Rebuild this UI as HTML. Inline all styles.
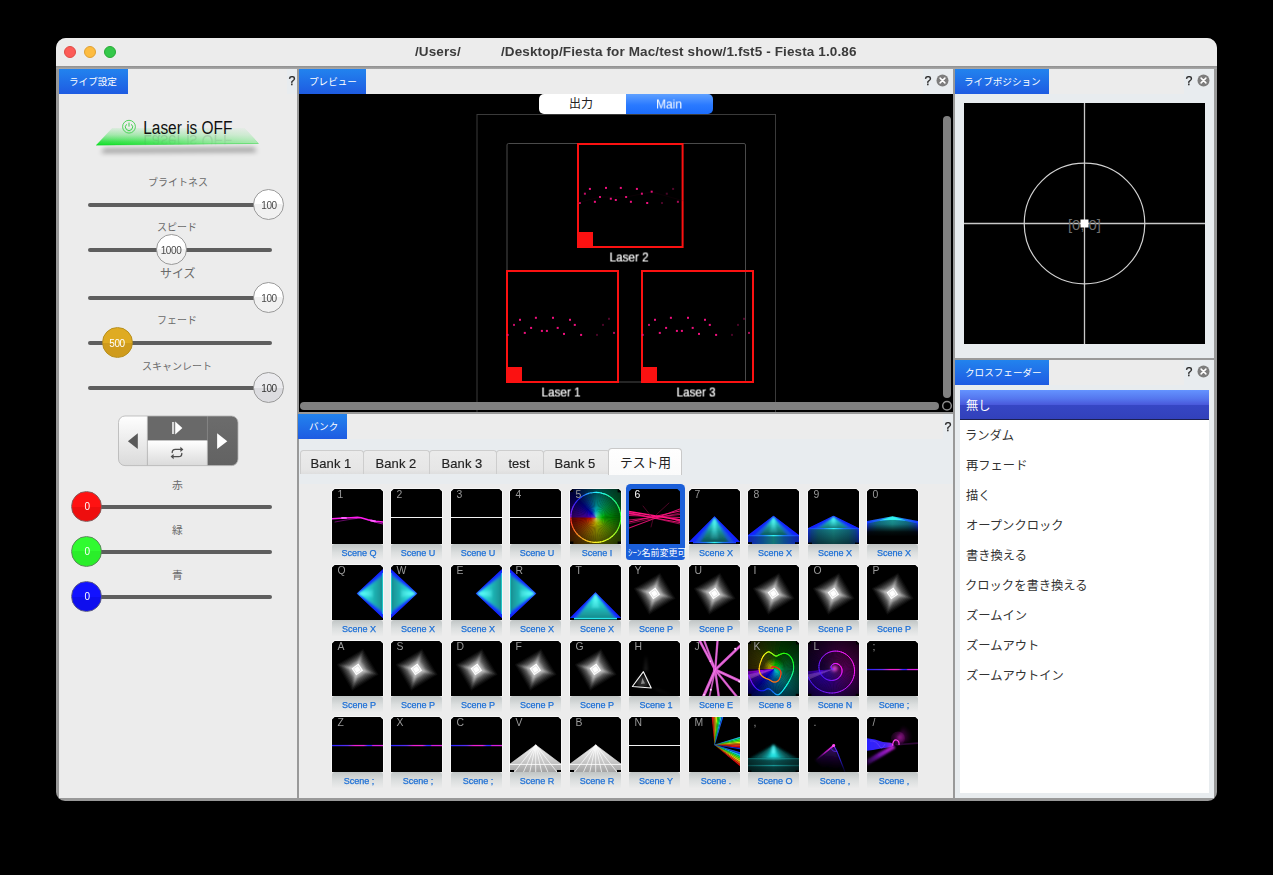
<!DOCTYPE html>
<html lang="ja"><head><meta charset="utf-8"><title>/Users/ /Desktop/Fiesta for Mac/test show/1.fst5 - Fiesta 1.0.86</title>
<style>
html,body{margin:0;padding:0;background:#000;}
body{width:1273px;height:875px;position:relative;overflow:hidden;font-family:"Liberation Sans",sans-serif;}
div,span.t,svg.jt,svg.a{position:absolute;box-sizing:border-box;}
span.t{white-space:nowrap;line-height:1;will-change:transform;}
svg.g{will-change:transform;}
svg.jt{overflow:visible;}
svg.jt text{font-family:"Liberation Sans","Noto Sans CJK JP",sans-serif;}
#win{left:56px;top:38px;width:1161px;height:763px;border-radius:10px 10px 9px 9px;overflow:hidden;background:#999;}
#win>div.o{left:-56px;top:-38px;width:1273px;height:875px;}
.tab{background:linear-gradient(#2283ee,#1e5be2);}
.hdr{background:#ececec;}
.q{font-weight:normal;}
</style></head>
<body>
<div id="win"><div class="o">
<div style="left:56px;top:38px;width:1161px;height:28px;background:#ececec;"></div><div style="left:56px;top:66px;width:1161px;height:3px;background:linear-gradient(#8f8f8f,#a9a9a9);"></div><div style="left:64px;top:46px;width:12px;height:12px;border-radius:50%;background:#fc5b57;border:0.5px solid #df4a43;"></div><div style="left:84px;top:46px;width:12px;height:12px;border-radius:50%;background:#fdbc40;border:0.5px solid #dfa032;"></div><div style="left:104px;top:46px;width:12px;height:12px;border-radius:50%;background:#34c84a;border:0.5px solid #27aa35;"></div><span class="t" style="left:415px;top:52px;font-size:13.5px;color:#3b3b3b;font-weight:bold;transform:translate(0,-50%);letter-spacing:0.1px;">/Users/</span><span class="t" style="left:501px;top:52px;font-size:13.5px;color:#3b3b3b;font-weight:bold;transform:translate(0,-50%);letter-spacing:0.12px;">/Desktop/Fiesta for Mac/test show/1.fst5 - Fiesta 1.0.86</span><div style="left:59px;top:69px;width:238px;height:729px;background:#ececec;"></div><div style="left:299px;top:69px;width:654px;height:343px;background:#000;"></div><div style="left:299px;top:69px;width:654px;height:25px;background:#ececec;"></div><div style="left:923px;top:69px;width:30px;height:25px;background:#e8ecef;"></div><div style="left:299px;top:414px;width:654px;height:384px;background:#ececec;"></div><div style="left:299px;top:439px;width:654px;height:45px;background:#e8ecef;"></div><div style="left:943px;top:414px;width:10px;height:25px;background:#e8ecef;"></div><div style="left:955px;top:69px;width:259px;height:289px;background:#e8ecef;"></div><div style="left:955px;top:69px;width:229px;height:25px;background:#ececec;"></div><div style="left:955px;top:360px;width:259px;height:438px;background:#e8ecef;"></div><div style="left:955px;top:360px;width:229px;height:25px;background:#ececec;"></div><div style="left:287px;top:69px;width:10px;height:25px;background:#e8ecef;"></div><div class="tab" style="left:59px;top:69px;width:69px;height:25px;"></div><svg class="jt" style="left:68.99px;top:75.73px" width="50.06" height="12.48" viewBox="0 -9.12 50.06 12.48"><text x="0" y="0" font-size="9.6" fill="#fff">ライブ設定</text></svg><div class="tab" style="left:299px;top:69px;width:67px;height:25px;"></div><svg class="jt" style="left:309.14px;top:75.73px" width="48.47" height="12.48" viewBox="0 -9.12 48.47 12.48"><text x="0" y="0" font-size="9.6" fill="#fff">プレビュー</text></svg><div class="tab" style="left:955px;top:69px;width:94px;height:25px;"></div><svg class="jt" style="left:964.18px;top:75.73px" width="77.04" height="12.48" viewBox="0 -9.12 77.04 12.48"><text x="0" y="0" font-size="9.6" fill="#fff">ライブポジション</text></svg><div class="tab" style="left:955px;top:360px;width:94px;height:25px;"></div><svg class="jt" style="left:964.78px;top:366.73px" width="76.48" height="12.48" viewBox="0 -9.12 76.48 12.48"><text x="0" y="0" font-size="9.6" fill="#fff">クロスフェーダー</text></svg><div class="tab" style="left:298.4px;top:414px;width:48.6px;height:25px;"></div><svg class="jt" style="left:308.69px;top:420.73px" width="30.63" height="12.48" viewBox="0 -9.12 30.63 12.48"><text x="0" y="0" font-size="9.6" fill="#fff">バンク</text></svg><span class="t" style="left:292px;top:81.3px;font-size:12.5px;color:#222;font-weight:normal;transform:translate(-50%,-50%);-webkit-text-stroke:0.25px #222;">?</span><span class="t" style="left:927.7px;top:81.3px;font-size:12.5px;color:#222;font-weight:normal;transform:translate(-50%,-50%);-webkit-text-stroke:0.25px #222;">?</span><svg class="a" style="left:936px;top:74.1px" width="13" height="13" viewBox="0 0 13 13"><circle cx="6.5" cy="6.5" r="6" fill="#7d7d7d"/><path d="M4.1 4.1L8.9 8.9M8.9 4.1L4.1 8.9" stroke="#fff" stroke-width="1.5" stroke-linecap="round"/></svg><span class="t" style="left:1188.8px;top:81.3px;font-size:12.5px;color:#222;font-weight:normal;transform:translate(-50%,-50%);-webkit-text-stroke:0.25px #222;">?</span><svg class="a" style="left:1197px;top:74.1px" width="13" height="13" viewBox="0 0 13 13"><circle cx="6.5" cy="6.5" r="6" fill="#7d7d7d"/><path d="M4.1 4.1L8.9 8.9M8.9 4.1L4.1 8.9" stroke="#fff" stroke-width="1.5" stroke-linecap="round"/></svg><span class="t" style="left:1188.8px;top:372.3px;font-size:12.5px;color:#222;font-weight:normal;transform:translate(-50%,-50%);-webkit-text-stroke:0.25px #222;">?</span><svg class="a" style="left:1197px;top:365.1px" width="13" height="13" viewBox="0 0 13 13"><circle cx="6.5" cy="6.5" r="6" fill="#7d7d7d"/><path d="M4.1 4.1L8.9 8.9M8.9 4.1L4.1 8.9" stroke="#fff" stroke-width="1.5" stroke-linecap="round"/></svg><span class="t" style="left:947.7px;top:426.8px;font-size:12.5px;color:#222;font-weight:normal;transform:translate(-50%,-50%);-webkit-text-stroke:0.25px #222;">?</span><svg class="a" style="left:80px;top:100px" width="200" height="70" viewBox="80 100 200 70">
<defs>
<linearGradient id="lg1" x1="0" y1="0" x2="0" y2="1"><stop offset="0" stop-color="#46e25a" stop-opacity="0.10"/><stop offset="0.4" stop-color="#36e24c" stop-opacity="0.42"/><stop offset="0.8" stop-color="#20e236" stop-opacity="0.9"/><stop offset="1" stop-color="#10e026" stop-opacity="1"/></linearGradient>
<linearGradient id="lg2" x1="0" y1="0" x2="1" y2="0"><stop offset="0" stop-color="#ececec" stop-opacity="0"/><stop offset="0.3" stop-color="#ececec" stop-opacity="0.12"/><stop offset="0.7" stop-color="#ececec" stop-opacity="0.5"/><stop offset="1" stop-color="#ececec" stop-opacity="0.66"/></linearGradient>
<filter id="bl1" x="-20%" y="-200%" width="140%" height="500%"><feGaussianBlur stdDeviation="2.6"/></filter>
<linearGradient id="rf" x1="0" y1="0" x2="0" y2="1"><stop offset="0" stop-color="#fff" stop-opacity="0.15"/><stop offset="1" stop-color="#fff" stop-opacity="0"/></linearGradient>
<mask id="rfm"><rect x="130" y="134" width="120" height="12" fill="url(#rf)"/></mask>
</defs>
<path d="M104 148.5 L254 147.5 L257 152 L101 153 Z" fill="#000" opacity="0.34" filter="url(#bl1)"/>
<path d="M112.2 128 L244.2 128 L258.6 143.4 L96 145.2 Z" fill="url(#lg1)"/>
<path d="M112.2 128 L244.2 128 L258.6 143.4 L96 145.2 Z" fill="url(#lg2)"/>
<path d="M96 145.2 L258.6 143.4" stroke="#14cc28" stroke-width="0.6" opacity="0.6"/>
<g mask="url(#rfm)"><text x="143.2" y="134" transform="translate(0,268.6) scale(1,-1)" font-size="17.6" textLength="89.3" lengthAdjust="spacingAndGlyphs" fill="#111" font-family="Liberation Sans, sans-serif">Laser is OFF</text></g>
<text x="143.2" y="133.6" font-size="17.6" textLength="89.3" lengthAdjust="spacingAndGlyphs" fill="#111" font-family="Liberation Sans, sans-serif">Laser is OFF</text>
<circle cx="129" cy="126.7" r="6.4" fill="none" stroke="#3fd04c" stroke-width="0.9"/>
<path d="M126.6 124.3 A3.6 3.6 0 1 0 131.4 124.3" fill="none" stroke="#3fd04c" stroke-width="1"/>
<path d="M129 122.6 V126.6" stroke="#3fd04c" stroke-width="1"/>
</svg><svg class="jt" style="left:147.63px;top:177.2px" width="63.05" height="13" viewBox="0 -9.5 63.05 13"><text x="0" y="0" font-size="10" fill="#6a6a6a">ブライトネス</text></svg><div style="left:88px;top:203px;width:184px;height:4px;border-radius:2px;background:#5e5e5e;"></div><div style="left:253.4px;top:189.2px;width:31px;height:31px;border-radius:50%;border:1px solid #9a9a9a;background:linear-gradient(#ffffff 0,#ffffff 50%,#f1f1f1 50%,#f1f1f1 100%);"></div><span class="t" style="left:269px;top:205.6px;font-size:10px;color:#4a4a4a;font-weight:normal;transform:translate(-50%,-50%);letter-spacing:-0.4px;">100</span><svg class="jt" style="left:156.96px;top:222.2px" width="43.79" height="13" viewBox="0 -9.5 43.79 13"><text x="0" y="0" font-size="10" fill="#6a6a6a">スピード</text></svg><div style="left:88px;top:248px;width:184px;height:4px;border-radius:2px;background:#5e5e5e;"></div><div style="left:155.5px;top:234.2px;width:31px;height:31px;border-radius:50%;border:1px solid #9a9a9a;background:linear-gradient(#ffffff 0,#ffffff 50%,#f1f1f1 50%,#f1f1f1 100%);"></div><span class="t" style="left:171.1px;top:250.6px;font-size:10px;color:#4a4a4a;font-weight:normal;transform:translate(-50%,-50%);letter-spacing:-0.4px;">1000</span><svg class="jt" style="left:160.05px;top:267.04px" width="37.64" height="15.6" viewBox="0 -11.4 37.64 15.6"><text x="0" y="0" font-size="12" fill="#6a6a6a">サイズ</text></svg><div style="left:88px;top:296px;width:184px;height:4px;border-radius:2px;background:#5e5e5e;"></div><div style="left:253.4px;top:282.2px;width:31px;height:31px;border-radius:50%;border:1px solid #9a9a9a;background:linear-gradient(#ffffff 0,#ffffff 50%,#f1f1f1 50%,#f1f1f1 100%);"></div><span class="t" style="left:269px;top:298.6px;font-size:10px;color:#4a4a4a;font-weight:normal;transform:translate(-50%,-50%);letter-spacing:-0.4px;">100</span><svg class="jt" style="left:157.04px;top:315.2px" width="43.76" height="13" viewBox="0 -9.5 43.76 13"><text x="0" y="0" font-size="10" fill="#6a6a6a">フェード</text></svg><div style="left:88px;top:341px;width:184px;height:4px;border-radius:2px;background:#5e5e5e;"></div><div style="left:101.6px;top:327.2px;width:31px;height:31px;border-radius:50%;border:1px solid #b8901e;background:linear-gradient(#dfab22 0,#dfab22 50%,#cf9b1c 50%,#cf9b1c 100%);"></div><span class="t" style="left:117.2px;top:343.6px;font-size:10px;color:#ffffff;font-weight:normal;transform:translate(-50%,-50%);letter-spacing:-0.4px;">500</span><svg class="jt" style="left:141.77px;top:360.2px" width="74" height="13" viewBox="0 -9.5 74 13"><text x="0" y="0" font-size="10" fill="#6a6a6a">スキャンレート</text></svg><div style="left:88px;top:386px;width:184px;height:4px;border-radius:2px;background:#5e5e5e;"></div><div style="left:253.4px;top:372.2px;width:31px;height:31px;border-radius:50%;border:1px solid #9a9a9a;background:linear-gradient(#ebebee 0,#ebebee 50%,#dcdce0 50%,#dcdce0 100%);"></div><span class="t" style="left:269px;top:388.6px;font-size:10px;color:#333;font-weight:normal;transform:translate(-50%,-50%);letter-spacing:-0.4px;">100</span><svg class="a" style="left:116px;top:413px" width="126" height="56" viewBox="116 413 126 56">
<defs>
<linearGradient id="tg1" x1="0" y1="0" x2="0" y2="1"><stop offset="0" stop-color="#ffffff"/><stop offset="1" stop-color="#d9d9d9"/></linearGradient>
<linearGradient id="tg2" x1="0" y1="0" x2="0" y2="1"><stop offset="0" stop-color="#6c6c6c"/><stop offset="1" stop-color="#626262"/></linearGradient>
<clipPath id="tcp"><rect x="118.5" y="416" width="119.5" height="49.6" rx="6.5"/></clipPath>
</defs>
<g clip-path="url(#tcp)">
<rect x="118" y="415" width="121" height="52" fill="url(#tg1)"/>
<rect x="147.6" y="415" width="60" height="25.6" fill="#696969"/>
<rect x="147.6" y="440.6" width="60" height="26" fill="url(#tg1)"/>
<rect x="207.6" y="415" width="32" height="52" fill="url(#tg2)"/>
<path d="M147.4 416 V466 M207.4 440.6 V466" stroke="#a8a8a8" stroke-width="0.7"/>
<path d="M207.4 416 V440.6" stroke="#7e7e7e" stroke-width="0.7"/>
</g>
<rect x="118.5" y="416" width="119.5" height="49.6" rx="6.5" fill="none" stroke="#b4b4b4" stroke-width="0.8"/>
<path d="M127.9 441.2 L137.8 433.2 V449 Z" fill="#595959"/>
<path d="M227.3 441.2 L217.1 433.2 V449 Z" fill="#fff"/>
<rect x="172" y="422" width="2.2" height="12" fill="#d8d8d8"/>
<path d="M175.2 421.6 L182.4 428 L175.2 434.4 Z" fill="#fff"/>
<g fill="none" stroke="#4e4e4e" stroke-width="1.3" stroke-linecap="round" stroke-linejoin="round">
<path d="M172.2 452.6 A3.2 3.2 0 0 1 175.4 449.4 H181"/>
<path d="M181.8 453.4 A3.2 3.2 0 0 1 178.6 456.6 H173"/>
</g>
<path d="M180.4 446.8 L183.4 449.4 L180.4 452 Z" fill="#4e4e4e"/>
<path d="M173.6 454 L170.6 456.6 L173.6 459.2 Z" fill="#4e4e4e"/>
</svg><svg class="jt" style="left:172.39px;top:479.24px" width="12.8" height="14.04" viewBox="0 -10.26 12.8 14.04"><text x="0" y="0" font-size="10.8" fill="#6a6a6a">赤</text></svg><div style="left:88px;top:505px;width:184px;height:4px;border-radius:2px;background:#5e5e5e;"></div><div style="left:71.1px;top:491px;width:31px;height:31px;border-radius:50%;border:1px solid #8a5a5a;background:linear-gradient(#ff1212 0,#ff1212 50%,#ee0e0e 50%,#ee0e0e 100%);"></div><span class="t" style="left:86.7px;top:507.4px;font-size:10px;color:#fff;font-weight:normal;transform:translate(-50%,-50%);letter-spacing:-0.4px;">0</span><svg class="jt" style="left:172.43px;top:524.04px" width="12.8" height="14.04" viewBox="0 -10.26 12.8 14.04"><text x="0" y="0" font-size="10.8" fill="#6a6a6a">緑</text></svg><div style="left:88px;top:550px;width:184px;height:4px;border-radius:2px;background:#5e5e5e;"></div><div style="left:71.1px;top:536px;width:31px;height:31px;border-radius:50%;border:1px solid #5a8a5a;background:linear-gradient(#30fb30 0,#30fb30 50%,#2aee2a 50%,#2aee2a 100%);"></div><span class="t" style="left:86.7px;top:552.4px;font-size:10px;color:#fff;font-weight:normal;transform:translate(-50%,-50%);letter-spacing:-0.4px;">0</span><svg class="jt" style="left:172.4px;top:568.74px" width="12.8" height="14.04" viewBox="0 -10.26 12.8 14.04"><text x="0" y="0" font-size="10.8" fill="#6a6a6a">青</text></svg><div style="left:88px;top:595px;width:184px;height:4px;border-radius:2px;background:#5e5e5e;"></div><div style="left:71.1px;top:581px;width:31px;height:31px;border-radius:50%;border:1px solid #5a5a8a;background:linear-gradient(#1212ff 0,#1212ff 50%,#0e0eee 50%,#0e0eee 100%);"></div><span class="t" style="left:86.7px;top:597.4px;font-size:10px;color:#fff;font-weight:normal;transform:translate(-50%,-50%);letter-spacing:-0.4px;">0</span><svg class="a" style="left:299px;top:94px" width="654" height="318" viewBox="299 94 654 318"><rect x="477" y="114.5" width="298.5" height="300" fill="none" stroke="#3a3a3a" stroke-width="1"/><rect x="507" y="143.5" width="238.5" height="238.5" rx="1.5" fill="none" stroke="#4a4a4a" stroke-width="1"/><rect x="578" y="144" width="104.60000000000002" height="103" fill="none" stroke="#fb1111" stroke-width="2"/><rect x="577" y="232" width="16" height="16" fill="#fb1111"/><rect x="588.9" y="187.9" width="2" height="2" fill="#f0107e" opacity="1"/><rect x="605" y="186.9" width="2" height="2" fill="#f0107e" opacity="1"/><rect x="619.8" y="186.9" width="2" height="2" fill="#f0107e" opacity="1"/><rect x="635.9" y="187.9" width="2" height="2" fill="#f0107e" opacity="1"/><rect x="650.7" y="190.7" width="2" height="2" fill="#f0107e" opacity="1"/><rect x="672.1" y="187.9" width="2" height="2" fill="#f0107e" opacity="0.35"/><rect x="583.9" y="192.7" width="2" height="2" fill="#f0107e" opacity="0.8"/><rect x="599" y="196" width="2" height="2" fill="#f0107e" opacity="1"/><rect x="609.8" y="197.7" width="2" height="2" fill="#f0107e" opacity="1"/><rect x="614.8" y="199" width="2" height="2" fill="#f0107e" opacity="1"/><rect x="625.1" y="196" width="2" height="2" fill="#f0107e" opacity="1"/><rect x="640.9" y="192.7" width="2" height="2" fill="#f0107e" opacity="1"/><rect x="629.9" y="200.8" width="2" height="2" fill="#f0107e" opacity="1"/><rect x="646.2" y="202" width="2" height="2" fill="#f0107e" opacity="1"/><rect x="593.9" y="200.8" width="2" height="2" fill="#f0107e" opacity="1"/><rect x="578.9" y="202" width="2" height="2" fill="#f0107e" opacity="0.8"/><rect x="665.8" y="192.7" width="2" height="2" fill="#f0107e" opacity="0.3"/><rect x="661" y="202" width="2" height="2" fill="#f0107e" opacity="0.3"/><rect x="676.9" y="200.8" width="2" height="2" fill="#f0107e" opacity="0.7"/><rect x="507" y="271" width="111" height="111" fill="none" stroke="#fb1111" stroke-width="2"/><rect x="506" y="367" width="16" height="16" fill="#fb1111"/><rect x="519" y="318.8" width="2" height="2" fill="#f0107e" opacity="1"/><rect x="534.9" y="316.8" width="2" height="2" fill="#f0107e" opacity="1"/><rect x="552" y="316.8" width="2" height="2" fill="#f0107e" opacity="1"/><rect x="569" y="318.8" width="2" height="2" fill="#f0107e" opacity="1"/><rect x="573.8" y="323.9" width="2" height="2" fill="#f0107e" opacity="1"/><rect x="608" y="317.8" width="2" height="2" fill="#f0107e" opacity="0.35"/><rect x="513" y="323.9" width="2" height="2" fill="#f0107e" opacity="0.8"/><rect x="530.1" y="326.9" width="2" height="2" fill="#f0107e" opacity="1"/><rect x="523.8" y="331.9" width="2" height="2" fill="#f0107e" opacity="1"/><rect x="540.9" y="329.9" width="2" height="2" fill="#f0107e" opacity="1"/><rect x="545.9" y="329.9" width="2" height="2" fill="#f0107e" opacity="1"/><rect x="556.7" y="326.9" width="2" height="2" fill="#f0107e" opacity="1"/><rect x="563" y="332.9" width="2" height="2" fill="#f0107e" opacity="1"/><rect x="580.1" y="333.9" width="2" height="2" fill="#f0107e" opacity="1"/><rect x="506.7" y="333.9" width="2" height="2" fill="#f0107e" opacity="0.8"/><rect x="602" y="323.9" width="2" height="2" fill="#f0107e" opacity="0.3"/><rect x="596" y="333.9" width="2" height="2" fill="#f0107e" opacity="0.3"/><rect x="613" y="331.9" width="2" height="2" fill="#f0107e" opacity="0.7"/><rect x="642" y="271" width="111" height="111" fill="none" stroke="#fb1111" stroke-width="2"/><rect x="641" y="367" width="16" height="16" fill="#fb1111"/><rect x="654" y="318.8" width="2" height="2" fill="#f0107e" opacity="1"/><rect x="669.9" y="316.8" width="2" height="2" fill="#f0107e" opacity="1"/><rect x="687" y="316.8" width="2" height="2" fill="#f0107e" opacity="1"/><rect x="704" y="318.8" width="2" height="2" fill="#f0107e" opacity="1"/><rect x="708.8" y="323.9" width="2" height="2" fill="#f0107e" opacity="1"/><rect x="743" y="317.8" width="2" height="2" fill="#f0107e" opacity="0.35"/><rect x="648" y="323.9" width="2" height="2" fill="#f0107e" opacity="0.8"/><rect x="665.1" y="326.9" width="2" height="2" fill="#f0107e" opacity="1"/><rect x="658.8" y="331.9" width="2" height="2" fill="#f0107e" opacity="1"/><rect x="675.9" y="329.9" width="2" height="2" fill="#f0107e" opacity="1"/><rect x="680.9" y="329.9" width="2" height="2" fill="#f0107e" opacity="1"/><rect x="691.7" y="326.9" width="2" height="2" fill="#f0107e" opacity="1"/><rect x="698" y="332.9" width="2" height="2" fill="#f0107e" opacity="1"/><rect x="715.1" y="333.9" width="2" height="2" fill="#f0107e" opacity="1"/><rect x="641.7" y="333.9" width="2" height="2" fill="#f0107e" opacity="0.8"/><rect x="737" y="323.9" width="2" height="2" fill="#f0107e" opacity="0.3"/><rect x="731" y="333.9" width="2" height="2" fill="#f0107e" opacity="0.3"/><rect x="748" y="331.9" width="2" height="2" fill="#f0107e" opacity="0.7"/><path d="M577 203 L600 197 L626 197 L652 192 L684 201" stroke="#40081e" stroke-width="0.6" fill="none" opacity="0.3"/></svg><span class="t" style="left:629.3px;top:256.9px;font-size:13px;color:#fff;font-weight:normal;transform:translate(-50%,-50%);transform:translate(-50%,-50%) scaleX(0.9);-webkit-text-stroke:0.2px #fff;">Laser 2</span><span class="t" style="left:561px;top:391.8px;font-size:13px;color:#fff;font-weight:normal;transform:translate(-50%,-50%);transform:translate(-50%,-50%) scaleX(0.9);-webkit-text-stroke:0.2px #fff;">Laser 1</span><span class="t" style="left:696px;top:391.8px;font-size:13px;color:#fff;font-weight:normal;transform:translate(-50%,-50%);transform:translate(-50%,-50%) scaleX(0.9);-webkit-text-stroke:0.2px #fff;">Laser 3</span><div style="left:539px;top:94.4px;width:87px;height:19.6px;background:#fff;border-radius:5px 0 0 5px;"></div><div style="left:626px;top:94.4px;width:87px;height:19.6px;background:linear-gradient(#5fa0ff,#2a7aff 55%,#1c6cfb);border-radius:0 5px 5px 0;"></div><svg class="jt" style="left:569.35px;top:97.44px" width="27.64" height="15.6" viewBox="0 -11.4 27.64 15.6"><text x="0" y="0" font-size="12" fill="#222">出力</text></svg><span class="t" style="left:669px;top:104.4px;font-size:13px;color:#fff;font-weight:normal;transform:translate(-50%,-50%);transform:translate(-50%,-50%) scaleX(0.92);">Main</span><div style="left:943px;top:116px;width:8px;height:282px;background:#808080;border-radius:4px;"></div><div style="left:300px;top:402px;width:639px;height:8.4px;background:#808080;border-radius:4.2px;"></div><svg class="a" style="left:940px;top:399px" width="14" height="14" viewBox="940 399 14 14"><circle cx="947" cy="405.8" r="4.3" fill="none" stroke="#8a8a8a" stroke-width="1.5"/></svg><svg class="a" style="left:964px;top:103px" width="241" height="241" viewBox="964 103 241 241">
<rect x="964" y="103" width="241" height="241" fill="#000"/>
<path d="M1084.5 103 V344 M964 223.5 H1205" stroke="#c8c8c8" stroke-width="1.3"/>
<circle cx="1084.5" cy="223.5" r="60.3" fill="none" stroke="#d0d0d0" stroke-width="1.2"/>
<text x="1084.5" y="230" font-size="15.5" fill="#707070" text-anchor="middle" font-family="Liberation Sans, sans-serif" textLength="33" lengthAdjust="spacingAndGlyphs">[0, 0]</text>
<rect x="1080.5" y="219.5" width="8" height="8" fill="#fff"/>
</svg><div style="left:960px;top:390px;width:249px;height:403px;background:#fff;"></div><div style="left:960px;top:390px;width:249px;height:29px;background:linear-gradient(#6493ff 0,#5576ee 30%,#4a5adc 50%,#3646c4 53%,#3241bb 100%);"></div><div style="left:960px;top:419px;width:249px;height:1px;background:#1c2050;"></div><svg class="jt" style="left:966.08px;top:397.87px" width="26.78" height="15.99" viewBox="0 -11.69 26.78 15.99"><text x="0" y="0" font-size="12.3" fill="#fff">無し</text></svg><svg class="jt" style="left:964.87px;top:427.87px" width="51.04" height="15.99" viewBox="0 -11.69 51.04 15.99"><text x="0" y="0" font-size="12.3" fill="#333">ランダム</text></svg><svg class="jt" style="left:966.1px;top:457.87px" width="63.89" height="15.99" viewBox="0 -11.69 63.89 15.99"><text x="0" y="0" font-size="12.3" fill="#333">再フェード</text></svg><svg class="jt" style="left:966.24px;top:487.87px" width="27.91" height="15.99" viewBox="0 -11.69 27.91 15.99"><text x="0" y="0" font-size="12.3" fill="#333">描く</text></svg><svg class="jt" style="left:965.55px;top:517.87px" width="99.61" height="15.99" viewBox="0 -11.69 99.61 15.99"><text x="0" y="0" font-size="12.3" fill="#333">オープンクロック</text></svg><svg class="jt" style="left:965.9px;top:547.87px" width="65.53" height="15.99" viewBox="0 -11.69 65.53 15.99"><text x="0" y="0" font-size="12.3" fill="#333">書き換える</text></svg><svg class="jt" style="left:965.37px;top:577.87px" width="126.01" height="15.99" viewBox="0 -11.69 126.01 15.99"><text x="0" y="0" font-size="12.3" fill="#333">クロックを書き換える</text></svg><svg class="jt" style="left:965.63px;top:607.87px" width="62.91" height="15.99" viewBox="0 -11.69 62.91 15.99"><text x="0" y="0" font-size="12.3" fill="#333">ズームイン</text></svg><svg class="jt" style="left:965.62px;top:637.87px" width="75.87" height="15.99" viewBox="0 -11.69 75.87 15.99"><text x="0" y="0" font-size="12.3" fill="#333">ズームアウト</text></svg><svg class="jt" style="left:965.63px;top:667.87px" width="98.9" height="15.99" viewBox="0 -11.69 98.9 15.99"><text x="0" y="0" font-size="12.3" fill="#333">ズームアウトイン</text></svg><div style="left:299.6px;top:450.4px;width:64.8px;height:23.3px;background:linear-gradient(#ebebeb,#e6e6e6 80%,#dedede);border:1px solid #cdcdcd;border-bottom:none;border-radius:3.5px 3.5px 0 0;"></div><span class="t" style="left:330.9px;top:462.6px;font-size:13px;color:#222;font-weight:normal;transform:translate(-50%,-50%);letter-spacing:0.05px;-webkit-text-stroke:0.15px #222;">Bank 1</span><div style="left:363.4px;top:450.4px;width:67px;height:23.3px;background:linear-gradient(#ebebeb,#e6e6e6 80%,#dedede);border:1px solid #cdcdcd;border-bottom:none;border-radius:3.5px 3.5px 0 0;"></div><span class="t" style="left:395.8px;top:462.6px;font-size:13px;color:#222;font-weight:normal;transform:translate(-50%,-50%);letter-spacing:0.05px;-webkit-text-stroke:0.15px #222;">Bank 2</span><div style="left:429.4px;top:450.4px;width:67.2px;height:23.3px;background:linear-gradient(#ebebeb,#e6e6e6 80%,#dedede);border:1px solid #cdcdcd;border-bottom:none;border-radius:3.5px 3.5px 0 0;"></div><span class="t" style="left:461.9px;top:462.6px;font-size:13px;color:#222;font-weight:normal;transform:translate(-50%,-50%);letter-spacing:0.05px;-webkit-text-stroke:0.15px #222;">Bank 3</span><div style="left:495.6px;top:450.4px;width:48px;height:23.3px;background:linear-gradient(#ebebeb,#e6e6e6 80%,#dedede);border:1px solid #cdcdcd;border-bottom:none;border-radius:3.5px 3.5px 0 0;"></div><span class="t" style="left:518.5px;top:462.6px;font-size:13px;color:#222;font-weight:normal;transform:translate(-50%,-50%);letter-spacing:0.05px;-webkit-text-stroke:0.15px #222;">test</span><div style="left:542.6px;top:450.4px;width:67.2px;height:23.3px;background:linear-gradient(#ebebeb,#e6e6e6 80%,#dedede);border:1px solid #cdcdcd;border-bottom:none;border-radius:3.5px 3.5px 0 0;"></div><span class="t" style="left:575.1px;top:462.6px;font-size:13px;color:#222;font-weight:normal;transform:translate(-50%,-50%);letter-spacing:0.05px;-webkit-text-stroke:0.15px #222;">Bank 5</span><div style="left:608.4px;top:448.2px;width:73.5px;height:27px;background:linear-gradient(#fff,#fbfbfb);border:1px solid #c9c9c9;border-bottom:none;border-radius:4px 4px 0 0;"></div><svg class="jt" style="left:619.76px;top:454.88px" width="52.11" height="16.64" viewBox="0 -12.16 52.11 16.64"><text x="0" y="0" font-size="12.8" fill="#222">テスト用</text></svg><svg class="a" style="left:0;top:0" width="0" height="0"><defs>
<clipPath id="tc"><path d="M0 2.6 L2.6 0 H48.4 L51 2.6 V55 H0 Z"/></clipPath>
<filter id="b03" x="-20%" y="-20%" width="140%" height="140%"><feGaussianBlur stdDeviation="0.3"/></filter>
<filter id="b05" x="-20%" y="-20%" width="140%" height="140%"><feGaussianBlur stdDeviation="0.5"/></filter>
<filter id="b08" x="-20%" y="-20%" width="140%" height="140%"><feGaussianBlur stdDeviation="0.8"/></filter>
<filter id="b15" x="-30%" y="-30%" width="160%" height="160%"><feGaussianBlur stdDeviation="1.5"/></filter>
<filter id="b3" x="-50%" y="-50%" width="200%" height="200%"><feGaussianBlur stdDeviation="3"/></filter>
<linearGradient id="hl" x1="0" y1="0" x2="1" y2="0"><stop offset="0" stop-color="#1838ff"/><stop offset="0.3" stop-color="#1c7cf0"/><stop offset="0.5" stop-color="#30f4ee"/><stop offset="0.7" stop-color="#1c7cf0"/><stop offset="1" stop-color="#1838ff"/></linearGradient>
<linearGradient id="hl2" x1="0" y1="0" x2="1" y2="0"><stop offset="0" stop-color="#1226d8"/><stop offset="0.28" stop-color="#0f5aa8"/><stop offset="0.5" stop-color="#168c8c"/><stop offset="0.72" stop-color="#0f5aa8"/><stop offset="1" stop-color="#1226d8"/></linearGradient>
<linearGradient id="hl3" x1="0" y1="0" x2="1" y2="0"><stop offset="0" stop-color="#1430f0"/><stop offset="0.06" stop-color="#104ca8"/><stop offset="0.2" stop-color="#126e84"/><stop offset="0.5" stop-color="#1a9494"/><stop offset="0.8" stop-color="#126e84"/><stop offset="0.94" stop-color="#104ca8"/><stop offset="1" stop-color="#1430f0"/></linearGradient>
<linearGradient id="fdv" x1="0" y1="0" x2="0" y2="1"><stop offset="0" stop-color="#000" stop-opacity="0"/><stop offset="1" stop-color="#000" stop-opacity="1"/></linearGradient>
<linearGradient id="pml" x1="0" y1="0" x2="1" y2="0"><stop offset="0" stop-color="#2a22ff"/><stop offset="0.3" stop-color="#5a30f0"/><stop offset="0.45" stop-color="#f020d0"/><stop offset="0.62" stop-color="#e828d8"/><stop offset="0.7" stop-color="#3a28ff"/><stop offset="0.77" stop-color="#2a22ff"/><stop offset="0.8" stop-color="#d020e0"/><stop offset="1" stop-color="#e020e0"/></linearGradient>
<linearGradient id="wf" x1="0" y1="0" x2="0" y2="1"><stop offset="0" stop-color="#f4f4f4"/><stop offset="0.6" stop-color="#c8c8c8"/><stop offset="1" stop-color="#a4a4a4"/></linearGradient>
<radialGradient id="rg0" cx="0.5" cy="0.5" r="0.5"><stop offset="0" stop-color="#fff" stop-opacity="0.9"/><stop offset="1" stop-color="#fff" stop-opacity="0"/></radialGradient>
<linearGradient id="lblg" x1="0" y1="0" x2="0" y2="1"><stop offset="0" stop-color="#c0c5c5"/><stop offset="0.55" stop-color="#dcdfdf"/><stop offset="1" stop-color="#ebebeb"/></linearGradient>
</defs></svg><svg class="a" style="left:331px;top:543.6px" width="53" height="17" viewBox="-1 0 53 17"><path d="M0 3 Q0 0 3 0 H48 Q51 0 51 3 V16 H0 Z" fill="url(#lblg)"/></svg><svg class="a g" style="left:331px;top:488px" width="53" height="56" viewBox="-1 -1 53 56"><path d="M-0.8 2.3 L2.3 -0.8 H48.7 L51.8 2.3 V55 H-0.8 Z" fill="#fafafa"/><g clip-path="url(#tc)"><rect x="0" y="0" width="51" height="55" fill="#000"/><g fill="none" stroke-linecap="round" stroke-linejoin="round"><path d="M3 33 L14 31 L25 29.4" stroke="#a010a0" stroke-width="0.9" opacity="0.7"/><path d="M36 31 L44 33.4 L51 35" stroke="#c018c0" stroke-width="1" opacity="0.8"/><path d="M0 29.7 L12 29 L19 28.7 L25.4 28.4 L29 28.8 L36 30.8 L44 32.2 L51 33" stroke="#ff1cf0" stroke-width="1.6"/><path d="M10 29 L14 28.9 M39 31.6 L43 32.3" stroke="#ff60ff" stroke-width="1.8"/></g></g><text x="5.4" y="9.3" font-size="10.4" fill="#9a9a9a" font-family="Liberation Sans, sans-serif">1</text></svg><span class="t" style="left:359.3px;top:553.6px;font-size:9.05px;color:#1c6fd6;font-weight:normal;transform:translate(-50%,-50%);-webkit-text-stroke:0.25px #1c6fd6;">Scene Q</span><svg class="a" style="left:390px;top:543.6px" width="53" height="17" viewBox="-1 0 53 17"><path d="M0 3 Q0 0 3 0 H48 Q51 0 51 3 V16 H0 Z" fill="url(#lblg)"/></svg><svg class="a g" style="left:390px;top:488px" width="53" height="56" viewBox="-1 -1 53 56"><path d="M-0.8 2.3 L2.3 -0.8 H48.7 L51.8 2.3 V55 H-0.8 Z" fill="#fafafa"/><g clip-path="url(#tc)"><rect x="0" y="0" width="51" height="55" fill="#000"/><rect x="0" y="28" width="51" height="1" fill="#f2f2f2"/></g><text x="5.4" y="9.3" font-size="10.4" fill="#9a9a9a" font-family="Liberation Sans, sans-serif">2</text></svg><span class="t" style="left:418.3px;top:553.6px;font-size:9.05px;color:#1c6fd6;font-weight:normal;transform:translate(-50%,-50%);-webkit-text-stroke:0.25px #1c6fd6;">Scene U</span><svg class="a" style="left:450px;top:543.6px" width="53" height="17" viewBox="-1 0 53 17"><path d="M0 3 Q0 0 3 0 H48 Q51 0 51 3 V16 H0 Z" fill="url(#lblg)"/></svg><svg class="a g" style="left:450px;top:488px" width="53" height="56" viewBox="-1 -1 53 56"><path d="M-0.8 2.3 L2.3 -0.8 H48.7 L51.8 2.3 V55 H-0.8 Z" fill="#fafafa"/><g clip-path="url(#tc)"><rect x="0" y="0" width="51" height="55" fill="#000"/><rect x="0" y="28" width="51" height="1" fill="#f2f2f2"/></g><text x="5.4" y="9.3" font-size="10.4" fill="#9a9a9a" font-family="Liberation Sans, sans-serif">3</text></svg><span class="t" style="left:478.3px;top:553.6px;font-size:9.05px;color:#1c6fd6;font-weight:normal;transform:translate(-50%,-50%);-webkit-text-stroke:0.25px #1c6fd6;">Scene U</span><svg class="a" style="left:509px;top:543.6px" width="53" height="17" viewBox="-1 0 53 17"><path d="M0 3 Q0 0 3 0 H48 Q51 0 51 3 V16 H0 Z" fill="url(#lblg)"/></svg><svg class="a g" style="left:509px;top:488px" width="53" height="56" viewBox="-1 -1 53 56"><path d="M-0.8 2.3 L2.3 -0.8 H48.7 L51.8 2.3 V55 H-0.8 Z" fill="#fafafa"/><g clip-path="url(#tc)"><rect x="0" y="0" width="51" height="55" fill="#000"/><rect x="0" y="28" width="51" height="1" fill="#f2f2f2"/></g><text x="5.4" y="9.3" font-size="10.4" fill="#9a9a9a" font-family="Liberation Sans, sans-serif">4</text></svg><span class="t" style="left:537.3px;top:553.6px;font-size:9.05px;color:#1c6fd6;font-weight:normal;transform:translate(-50%,-50%);-webkit-text-stroke:0.25px #1c6fd6;">Scene U</span><svg class="a" style="left:569px;top:543.6px" width="53" height="17" viewBox="-1 0 53 17"><path d="M0 3 Q0 0 3 0 H48 Q51 0 51 3 V16 H0 Z" fill="url(#lblg)"/></svg><svg class="a g" style="left:569px;top:488px" width="53" height="56" viewBox="-1 -1 53 56"><path d="M-0.8 2.3 L2.3 -0.8 H48.7 L51.8 2.3 V55 H-0.8 Z" fill="#fafafa"/><g clip-path="url(#tc)"><rect x="0" y="0" width="51" height="55" fill="#000"/><defs><radialGradient id="u1" gradientUnits="userSpaceOnUse" cx="25.8" cy="28.4" r="38"><stop offset="0" stop-color="#000" stop-opacity="0"/><stop offset="0.1" stop-color="#000" stop-opacity="0.1"/><stop offset="0.3" stop-color="#000" stop-opacity="0.46"/><stop offset="0.66" stop-color="#000" stop-opacity="0.7"/><stop offset="1" stop-color="#000" stop-opacity="0.82"/></radialGradient></defs><g filter="url(#b05)"><path d="M25.8 28.4 L67.8 28.4 L67.47 33.62 Z" fill="#0dff00"/><path d="M25.8 28.4 L67.57 32.79 L66.7 37.95 Z" fill="#22ff00"/><path d="M25.8 28.4 L66.88 37.13 L65.48 42.17 Z" fill="#38ff00"/><path d="M25.8 28.4 L65.74 41.38 L63.82 46.25 Z" fill="#4dff00"/><path d="M25.8 28.4 L64.17 45.48 L61.75 50.12 Z" fill="#63ff00"/><path d="M25.8 28.4 L62.17 49.4 L59.28 53.76 Z" fill="#78ff00"/><path d="M25.8 28.4 L59.78 53.09 L56.44 57.12 Z" fill="#8eff00"/><path d="M25.8 28.4 L57.01 56.5 L53.27 60.17 Z" fill="#a3ff00"/><path d="M25.8 28.4 L53.9 59.61 L49.8 62.87 Z" fill="#b0ff00"/><path d="M25.8 28.4 L50.49 62.38 L46.07 65.19 Z" fill="#beff00"/><path d="M25.8 28.4 L46.8 64.77 L42.11 67.1 Z" fill="#ccff00"/><path d="M25.8 28.4 L42.88 66.77 L37.98 68.6 Z" fill="#d9ff00"/><path d="M25.8 28.4 L38.78 68.34 L33.71 69.65 Z" fill="#e7ff00"/><path d="M25.8 28.4 L34.53 69.48 L29.35 70.25 Z" fill="#f4ff00"/><path d="M25.8 28.4 L30.19 70.17 L24.96 70.39 Z" fill="#fffc00"/><path d="M25.8 28.4 L25.8 70.4 L20.58 70.07 Z" fill="#ffed00"/><path d="M25.8 28.4 L21.41 70.17 L16.25 69.3 Z" fill="#ffdd00"/><path d="M25.8 28.4 L17.07 69.48 L12.03 68.08 Z" fill="#ffcd00"/><path d="M25.8 28.4 L12.82 68.34 L7.95 66.42 Z" fill="#ffbd00"/><path d="M25.8 28.4 L8.72 66.77 L4.08 64.35 Z" fill="#ffae00"/><path d="M25.8 28.4 L4.8 64.77 L0.44 61.88 Z" fill="#ff9e00"/><path d="M25.8 28.4 L1.11 62.38 L-2.92 59.04 Z" fill="#ff8e00"/><path d="M25.8 28.4 L-2.3 59.61 L-5.97 55.87 Z" fill="#ff7e00"/><path d="M25.8 28.4 L-5.41 56.5 L-8.67 52.4 Z" fill="#ff6d00"/><path d="M25.8 28.4 L-8.18 53.09 L-10.99 48.67 Z" fill="#ff5c00"/><path d="M25.8 28.4 L-10.57 49.4 L-12.9 44.71 Z" fill="#ff4b00"/><path d="M25.8 28.4 L-12.57 45.48 L-14.4 40.58 Z" fill="#ff3a00"/><path d="M25.8 28.4 L-14.14 41.38 L-15.45 36.31 Z" fill="#ff2900"/><path d="M25.8 28.4 L-15.28 37.13 L-16.05 31.95 Z" fill="#ff1800"/><path d="M25.8 28.4 L-15.97 32.79 L-16.19 27.56 Z" fill="#ff0700"/><path d="M25.8 28.4 L-16.2 28.4 L-15.87 23.18 Z" fill="#7d00ff"/><path d="M25.8 28.4 L-15.97 24.01 L-15.1 18.85 Z" fill="#6b00ff"/><path d="M25.8 28.4 L-15.28 19.67 L-13.88 14.63 Z" fill="#5900ff"/><path d="M25.8 28.4 L-14.14 15.42 L-12.22 10.55 Z" fill="#4700ff"/><path d="M25.8 28.4 L-12.57 11.32 L-10.15 6.68 Z" fill="#3500ff"/><path d="M25.8 28.4 L-10.57 7.4 L-7.68 3.04 Z" fill="#2300ff"/><path d="M25.8 28.4 L-8.18 3.71 L-4.84 -0.32 Z" fill="#1000ff"/><path d="M25.8 28.4 L-5.41 0.3 L-1.67 -3.37 Z" fill="#0003ff"/><path d="M25.8 28.4 L-2.3 -2.81 L1.8 -6.07 Z" fill="#0022ff"/><path d="M25.8 28.4 L1.11 -5.58 L5.53 -8.39 Z" fill="#0041ff"/><path d="M25.8 28.4 L4.8 -7.97 L9.49 -10.3 Z" fill="#0060ff"/><path d="M25.8 28.4 L8.72 -9.97 L13.62 -11.8 Z" fill="#0080ff"/><path d="M25.8 28.4 L12.82 -11.54 L17.89 -12.85 Z" fill="#009fff"/><path d="M25.8 28.4 L17.07 -12.68 L22.25 -13.45 Z" fill="#00beff"/><path d="M25.8 28.4 L21.41 -13.37 L26.64 -13.59 Z" fill="#00ddff"/><path d="M25.8 28.4 L25.8 -13.6 L31.02 -13.27 Z" fill="#00f6ff"/><path d="M25.8 28.4 L30.19 -13.37 L35.35 -12.5 Z" fill="#00fff5"/><path d="M25.8 28.4 L34.53 -12.68 L39.57 -11.28 Z" fill="#00ffe1"/><path d="M25.8 28.4 L38.78 -11.54 L43.65 -9.62 Z" fill="#00ffcd"/><path d="M25.8 28.4 L42.88 -9.97 L47.52 -7.55 Z" fill="#00ffb9"/><path d="M25.8 28.4 L46.8 -7.97 L51.16 -5.08 Z" fill="#00ffa5"/><path d="M25.8 28.4 L50.49 -5.58 L54.52 -2.24 Z" fill="#00ff91"/><path d="M25.8 28.4 L53.9 -2.81 L57.57 0.93 Z" fill="#00ff7e"/><path d="M25.8 28.4 L57.01 0.3 L60.27 4.4 Z" fill="#00ff6d"/><path d="M25.8 28.4 L59.78 3.71 L62.59 8.13 Z" fill="#00ff5c"/><path d="M25.8 28.4 L62.17 7.4 L64.5 12.09 Z" fill="#00ff4b"/><path d="M25.8 28.4 L64.17 11.32 L66 16.22 Z" fill="#00ff3a"/><path d="M25.8 28.4 L65.74 15.42 L67.05 20.49 Z" fill="#00ff29"/><path d="M25.8 28.4 L66.88 19.67 L67.65 24.85 Z" fill="#00ff18"/><path d="M25.8 28.4 L67.57 24.01 L67.79 29.24 Z" fill="#00ff07"/></g><rect x="0" y="0" width="51" height="55" fill="url(#u1)"/><circle cx="26.400000000000002" cy="28.099999999999998" r="6" fill="url(#rg0)" opacity="0.4"/><path d="M50.8 28.4 A25 25 0 0 1 50.57 31.76" stroke="#32ff26" stroke-width="1.1" fill="none"/><path d="M50.66 31.01 A25 25 0 0 1 50.09 34.33" stroke="#44ff26" stroke-width="1.1" fill="none"/><path d="M50.25 33.6 A25 25 0 0 1 49.33 36.84" stroke="#57ff26" stroke-width="1.1" fill="none"/><path d="M49.58 36.13 A25 25 0 0 1 48.32 39.25" stroke="#69ff26" stroke-width="1.1" fill="none"/><path d="M48.64 38.57 A25 25 0 0 1 47.07 41.54" stroke="#7bff26" stroke-width="1.1" fill="none"/><path d="M47.45 40.9 A25 25 0 0 1 45.58 43.69" stroke="#8eff26" stroke-width="1.1" fill="none"/><path d="M46.03 43.09 A25 25 0 0 1 43.87 45.68" stroke="#a0ff26" stroke-width="1.1" fill="none"/><path d="M44.38 45.13 A25 25 0 0 1 41.96 47.47" stroke="#b1ff26" stroke-width="1.1" fill="none"/><path d="M42.53 46.98 A25 25 0 0 1 39.88 49.06" stroke="#bdff26" stroke-width="1.1" fill="none"/><path d="M40.49 48.63 A25 25 0 0 1 37.64 50.42" stroke="#c8ff26" stroke-width="1.1" fill="none"/><path d="M38.3 50.05 A25 25 0 0 1 35.28 51.53" stroke="#d4ff26" stroke-width="1.1" fill="none"/><path d="M35.97 51.24 A25 25 0 0 1 32.81 52.4" stroke="#dfff26" stroke-width="1.1" fill="none"/><path d="M33.53 52.18 A25 25 0 0 1 30.26 53" stroke="#ebff26" stroke-width="1.1" fill="none"/><path d="M31 52.85 A25 25 0 0 1 27.67 53.33" stroke="#f7ff26" stroke-width="1.1" fill="none"/><path d="M28.41 53.26 A25 25 0 0 1 25.05 53.39" stroke="#fffc26" stroke-width="1.1" fill="none"/><path d="M25.8 53.4 A25 25 0 0 1 22.44 53.17" stroke="#ffef26" stroke-width="1.1" fill="none"/><path d="M23.19 53.26 A25 25 0 0 1 19.87 52.69" stroke="#ffe226" stroke-width="1.1" fill="none"/><path d="M20.6 52.85 A25 25 0 0 1 17.36 51.93" stroke="#ffd426" stroke-width="1.1" fill="none"/><path d="M18.07 52.18 A25 25 0 0 1 14.95 50.92" stroke="#ffc726" stroke-width="1.1" fill="none"/><path d="M15.63 51.24 A25 25 0 0 1 12.66 49.67" stroke="#ffb926" stroke-width="1.1" fill="none"/><path d="M13.3 50.05 A25 25 0 0 1 10.51 48.18" stroke="#ffac26" stroke-width="1.1" fill="none"/><path d="M11.11 48.63 A25 25 0 0 1 8.52 46.47" stroke="#ff9e26" stroke-width="1.1" fill="none"/><path d="M9.07 46.98 A25 25 0 0 1 6.73 44.56" stroke="#ff9126" stroke-width="1.1" fill="none"/><path d="M7.22 45.13 A25 25 0 0 1 5.14 42.48" stroke="#ff8226" stroke-width="1.1" fill="none"/><path d="M5.57 43.09 A25 25 0 0 1 3.78 40.24" stroke="#ff7426" stroke-width="1.1" fill="none"/><path d="M4.15 40.9 A25 25 0 0 1 2.67 37.88" stroke="#ff6526" stroke-width="1.1" fill="none"/><path d="M2.96 38.57 A25 25 0 0 1 1.8 35.41" stroke="#ff5726" stroke-width="1.1" fill="none"/><path d="M2.02 36.13 A25 25 0 0 1 1.2 32.86" stroke="#ff4826" stroke-width="1.1" fill="none"/><path d="M1.35 33.6 A25 25 0 0 1 0.87 30.27" stroke="#ff3a26" stroke-width="1.1" fill="none"/><path d="M0.94 31.01 A25 25 0 0 1 0.81 27.65" stroke="#ff2b26" stroke-width="1.1" fill="none"/><path d="M0.8 28.4 A25 25 0 0 1 1.03 25.04" stroke="#9026ff" stroke-width="1.1" fill="none"/><path d="M0.94 25.79 A25 25 0 0 1 1.51 22.47" stroke="#8126ff" stroke-width="1.1" fill="none"/><path d="M1.35 23.2 A25 25 0 0 1 2.27 19.96" stroke="#7126ff" stroke-width="1.1" fill="none"/><path d="M2.02 20.67 A25 25 0 0 1 3.28 17.55" stroke="#6226ff" stroke-width="1.1" fill="none"/><path d="M2.96 18.23 A25 25 0 0 1 4.53 15.26" stroke="#5226ff" stroke-width="1.1" fill="none"/><path d="M4.15 15.9 A25 25 0 0 1 6.02 13.11" stroke="#4326ff" stroke-width="1.1" fill="none"/><path d="M5.57 13.71 A25 25 0 0 1 7.73 11.12" stroke="#3326ff" stroke-width="1.1" fill="none"/><path d="M7.22 11.67 A25 25 0 0 1 9.64 9.33" stroke="#262aff" stroke-width="1.1" fill="none"/><path d="M9.07 9.82 A25 25 0 0 1 11.72 7.74" stroke="#2645ff" stroke-width="1.1" fill="none"/><path d="M11.11 8.17 A25 25 0 0 1 13.96 6.38" stroke="#265fff" stroke-width="1.1" fill="none"/><path d="M13.3 6.75 A25 25 0 0 1 16.32 5.27" stroke="#267aff" stroke-width="1.1" fill="none"/><path d="M15.63 5.56 A25 25 0 0 1 18.79 4.4" stroke="#2694ff" stroke-width="1.1" fill="none"/><path d="M18.07 4.62 A25 25 0 0 1 21.34 3.8" stroke="#26afff" stroke-width="1.1" fill="none"/><path d="M20.6 3.95 A25 25 0 0 1 23.93 3.47" stroke="#26c9ff" stroke-width="1.1" fill="none"/><path d="M23.19 3.54 A25 25 0 0 1 26.55 3.41" stroke="#26e3ff" stroke-width="1.1" fill="none"/><path d="M25.8 3.4 A25 25 0 0 1 29.16 3.63" stroke="#26f8ff" stroke-width="1.1" fill="none"/><path d="M28.41 3.54 A25 25 0 0 1 31.73 4.11" stroke="#26fff5" stroke-width="1.1" fill="none"/><path d="M31 3.95 A25 25 0 0 1 34.24 4.87" stroke="#26ffe5" stroke-width="1.1" fill="none"/><path d="M33.53 4.62 A25 25 0 0 1 36.65 5.88" stroke="#26ffd4" stroke-width="1.1" fill="none"/><path d="M35.97 5.56 A25 25 0 0 1 38.94 7.13" stroke="#26ffc3" stroke-width="1.1" fill="none"/><path d="M38.3 6.75 A25 25 0 0 1 41.09 8.62" stroke="#26ffb2" stroke-width="1.1" fill="none"/><path d="M40.49 8.17 A25 25 0 0 1 43.08 10.33" stroke="#26ffa1" stroke-width="1.1" fill="none"/><path d="M42.53 9.82 A25 25 0 0 1 44.87 12.24" stroke="#26ff91" stroke-width="1.1" fill="none"/><path d="M44.38 11.67 A25 25 0 0 1 46.46 14.32" stroke="#26ff82" stroke-width="1.1" fill="none"/><path d="M46.03 13.71 A25 25 0 0 1 47.82 16.56" stroke="#26ff74" stroke-width="1.1" fill="none"/><path d="M47.45 15.9 A25 25 0 0 1 48.93 18.92" stroke="#26ff65" stroke-width="1.1" fill="none"/><path d="M48.64 18.23 A25 25 0 0 1 49.8 21.39" stroke="#26ff57" stroke-width="1.1" fill="none"/><path d="M49.58 20.67 A25 25 0 0 1 50.4 23.94" stroke="#26ff48" stroke-width="1.1" fill="none"/><path d="M50.25 23.2 A25 25 0 0 1 50.73 26.53" stroke="#26ff3a" stroke-width="1.1" fill="none"/><path d="M50.66 25.79 A25 25 0 0 1 50.79 29.15" stroke="#26ff2b" stroke-width="1.1" fill="none"/><rect x="0" y="0" width="3.2" height="3" fill="#000"/><rect x="47.6" y="0" width="3.4" height="3.4" fill="#000"/><rect x="0" y="52.5" width="3.4" height="2.5" fill="#000"/><rect x="47.6" y="52.5" width="3.4" height="2.5" fill="#000"/></g><text x="5.4" y="9.3" font-size="10.4" fill="#9a9a9a" font-family="Liberation Sans, sans-serif">5</text></svg><span class="t" style="left:597.3px;top:553.6px;font-size:9.05px;color:#1c6fd6;font-weight:normal;transform:translate(-50%,-50%);-webkit-text-stroke:0.25px #1c6fd6;">Scene I</span><div style="left:626px;top:484px;width:59px;height:75.6px;background:#1b5fd9;border-radius:4.5px 4.5px 3.5px 3.5px;"></div><svg class="a g" style="left:628px;top:488px" width="53" height="56" viewBox="-1 -1 53 56"><g clip-path="url(#tc)"><rect x="0" y="0" width="51" height="55" fill="#000"/><g stroke-linecap="round"><path d="M0 22.5 L51 31" stroke="#ff1480" stroke-width="1.3" opacity="1"/><path d="M0 24.5 L51 33.5" stroke="#ff1480" stroke-width="1.2" opacity="0.9"/><path d="M0 26.5 L51 28.5" stroke="#ff1480" stroke-width="1.1" opacity="0.8"/><path d="M0 33 L51 22" stroke="#ff1480" stroke-width="1.2" opacity="0.9"/><path d="M0 39 L51 20" stroke="#ff1480" stroke-width="1.1" opacity="0.85"/><path d="M0 31 L51 25.5" stroke="#ff1480" stroke-width="1" opacity="0.7"/><path d="M0 23.5 L51 35" stroke="#ff1480" stroke-width="1" opacity="0.6"/><path d="M0 34.5 L51 24" stroke="#ff1480" stroke-width="0.9" opacity="0.55"/><path d="M14 17 L22 27 M40 14 L27 26 M24 30 L22 38" stroke="#7a0a3c" stroke-width="0.8" opacity="0.8"/><path d="M0 23.5 L17 26.5 L0 25.5 Z M51 30 L38 28.5 L51 33 Z" fill="#ff1480" opacity="0.8"/></g></g><text x="5.4" y="9.3" font-size="10.4" fill="#fff" font-family="Liberation Sans, sans-serif">6</text></svg><svg class="a" style="left:688px;top:543.6px" width="53" height="17" viewBox="-1 0 53 17"><path d="M0 3 Q0 0 3 0 H48 Q51 0 51 3 V16 H0 Z" fill="url(#lblg)"/></svg><svg class="a g" style="left:688px;top:488px" width="53" height="56" viewBox="-1 -1 53 56"><path d="M-0.8 2.3 L2.3 -0.8 H48.7 L51.8 2.3 V55 H-0.8 Z" fill="#fafafa"/><g clip-path="url(#tc)"><rect x="0" y="0" width="51" height="55" fill="#000"/><g transform="translate(25.5 27.8) rotate(0)"><defs><linearGradient id="u2" gradientUnits="userSpaceOnUse" x1="0" y1="0" x2="0" y2="25.4"><stop offset="0" stop-color="#3cfff6"/><stop offset="0.25" stop-color="#28dcd7"/><stop offset="0.6" stop-color="#188f8f"/><stop offset="1" stop-color="#0c5052"/></linearGradient><linearGradient id="u2m" gradientUnits="userSpaceOnUse" x1="0" y1="0" x2="0" y2="25.4"><stop offset="0" stop-color="#1a78f0"/><stop offset="1" stop-color="#124ecf"/></linearGradient><linearGradient id="u2k" gradientUnits="userSpaceOnUse" x1="0" y1="0" x2="0" y2="25.4"><stop offset="0" stop-color="#80fffa" stop-opacity="1"/><stop offset="1" stop-color="#40f0f0" stop-opacity="0"/></linearGradient><clipPath id="u2c"><path d="M0 -0.8 L-25.9 25.4 L25.9 25.4 Z"/></clipPath></defs><g clip-path="url(#u2c)"><path d="M0 -1 L-26.5 25.4 L26.5 25.4 Z" fill="#1422ff"/><g filter="url(#b08)"><path d="M0 0.5 L-21.42 27.4 L21.42 27.4 Z" fill="url(#u2m)"/><path d="M0 0.9 L-15.3 27.4 L15.3 27.4 Z" fill="url(#u2)"/></g><path d="M0 0 L-4.08 22.86 L4.08 22.86 Z" fill="url(#u2k)" filter="url(#b08)"/></g></g><rect x="4" y="52.85" width="43" height="1.5" fill="url(#hl)" opacity="1"/><rect x="0" y="53" width="4" height="2" fill="#000"/><rect x="47" y="53" width="4" height="2" fill="#000"/></g><text x="5.4" y="9.3" font-size="10.4" fill="#9a9a9a" font-family="Liberation Sans, sans-serif">7</text></svg><span class="t" style="left:716.3px;top:553.6px;font-size:9.05px;color:#1c6fd6;font-weight:normal;transform:translate(-50%,-50%);-webkit-text-stroke:0.25px #1c6fd6;">Scene X</span><svg class="a" style="left:747px;top:543.6px" width="53" height="17" viewBox="-1 0 53 17"><path d="M0 3 Q0 0 3 0 H48 Q51 0 51 3 V16 H0 Z" fill="url(#lblg)"/></svg><svg class="a g" style="left:747px;top:488px" width="53" height="56" viewBox="-1 -1 53 56"><path d="M-0.8 2.3 L2.3 -0.8 H48.7 L51.8 2.3 V55 H-0.8 Z" fill="#fafafa"/><g clip-path="url(#tc)"><rect x="0" y="0" width="51" height="55" fill="#000"/><g transform="translate(25.5 27.3) rotate(0)"><defs><linearGradient id="u3" gradientUnits="userSpaceOnUse" x1="0" y1="0" x2="0" y2="19"><stop offset="0" stop-color="#3cfff6"/><stop offset="0.25" stop-color="#29ded8"/><stop offset="0.6" stop-color="#199494"/><stop offset="1" stop-color="#0d5759"/></linearGradient><linearGradient id="u3m" gradientUnits="userSpaceOnUse" x1="0" y1="0" x2="0" y2="19"><stop offset="0" stop-color="#1a78f0"/><stop offset="1" stop-color="#1250d2"/></linearGradient><linearGradient id="u3k" gradientUnits="userSpaceOnUse" x1="0" y1="0" x2="0" y2="19"><stop offset="0" stop-color="#80fffa" stop-opacity="1"/><stop offset="1" stop-color="#40f0f0" stop-opacity="0"/></linearGradient><clipPath id="u3c"><path d="M0 -0.8 L-25.9 19 L25.9 19 Z"/></clipPath></defs><g clip-path="url(#u3c)"><path d="M0 -1 L-26.5 19 L26.5 19 Z" fill="#1422ff"/><g filter="url(#b08)"><path d="M0 0.5 L-21.42 21 L21.42 21 Z" fill="url(#u3m)"/><path d="M0 0.9 L-15.3 21 L15.3 21 Z" fill="url(#u3)"/></g><path d="M0 0 L-4.08 17.1 L4.08 17.1 Z" fill="url(#u3k)" filter="url(#b08)"/></g></g><rect x="0" y="46.3" width="51" height="8.7" fill="url(#hl2)"/><rect x="0" y="46.3" width="51" height="8.7" fill="#000" opacity="0.15"/><rect x="0" y="45.95" width="51" height="1.3" fill="url(#hl)" opacity="1"/><rect x="0" y="53.2" width="4" height="1.8" fill="#000"/><rect x="47" y="53.2" width="4" height="1.8" fill="#000"/></g><text x="5.4" y="9.3" font-size="10.4" fill="#9a9a9a" font-family="Liberation Sans, sans-serif">8</text></svg><span class="t" style="left:775.3px;top:553.6px;font-size:9.05px;color:#1c6fd6;font-weight:normal;transform:translate(-50%,-50%);-webkit-text-stroke:0.25px #1c6fd6;">Scene X</span><svg class="a" style="left:807px;top:543.6px" width="53" height="17" viewBox="-1 0 53 17"><path d="M0 3 Q0 0 3 0 H48 Q51 0 51 3 V16 H0 Z" fill="url(#lblg)"/></svg><svg class="a g" style="left:807px;top:488px" width="53" height="56" viewBox="-1 -1 53 56"><path d="M-0.8 2.3 L2.3 -0.8 H48.7 L51.8 2.3 V55 H-0.8 Z" fill="#fafafa"/><g clip-path="url(#tc)"><rect x="0" y="0" width="51" height="55" fill="#000"/><g transform="translate(25.5 27.3) rotate(0)"><defs><linearGradient id="u5" gradientUnits="userSpaceOnUse" x1="0" y1="0" x2="0" y2="12"><stop offset="0" stop-color="#3cfff6"/><stop offset="0.25" stop-color="#2ae4de"/><stop offset="0.6" stop-color="#1ca7a7"/><stop offset="1" stop-color="#127275"/></linearGradient><linearGradient id="u5m" gradientUnits="userSpaceOnUse" x1="0" y1="0" x2="0" y2="12"><stop offset="0" stop-color="#1a78f0"/><stop offset="1" stop-color="#145add"/></linearGradient><linearGradient id="u5k" gradientUnits="userSpaceOnUse" x1="0" y1="0" x2="0" y2="12"><stop offset="0" stop-color="#80fffa" stop-opacity="1"/><stop offset="1" stop-color="#40f0f0" stop-opacity="0"/></linearGradient><clipPath id="u5c"><path d="M0 -0.8 L-25.9 12 L25.9 12 Z"/></clipPath></defs><g clip-path="url(#u5c)"><path d="M0 -1 L-26.5 12 L26.5 12 Z" fill="#1422ff"/><g filter="url(#b08)"><path d="M0 0.5 L-21.93 14 L21.93 14 Z" fill="url(#u5m)"/><path d="M0 0.9 L-16.83 14 L16.83 14 Z" fill="url(#u5)"/></g><path d="M0 0 L-4.08 10.8 L4.08 10.8 Z" fill="url(#u5k)" filter="url(#b08)"/></g></g><defs><linearGradient id="u4" x1="0" y1="0" x2="0" y2="1"><stop offset="0" stop-color="#000" stop-opacity="0.1"/><stop offset="1" stop-color="#000" stop-opacity="0.55"/></linearGradient></defs><rect x="0" y="39.3" width="51" height="15.7" fill="url(#hl3)"/><rect x="0" y="39.3" width="51" height="15.7" fill="url(#u4)"/><rect x="0" y="39" width="51" height="1.2" fill="url(#hl)" opacity="1"/><rect x="0" y="53.6" width="4" height="1.4" fill="#000"/><rect x="47" y="53.6" width="4" height="1.4" fill="#000"/></g><text x="5.4" y="9.3" font-size="10.4" fill="#9a9a9a" font-family="Liberation Sans, sans-serif">9</text></svg><span class="t" style="left:835.3px;top:553.6px;font-size:9.05px;color:#1c6fd6;font-weight:normal;transform:translate(-50%,-50%);-webkit-text-stroke:0.25px #1c6fd6;">Scene X</span><svg class="a" style="left:866px;top:543.6px" width="53" height="17" viewBox="-1 0 53 17"><path d="M0 3 Q0 0 3 0 H48 Q51 0 51 3 V16 H0 Z" fill="url(#lblg)"/></svg><svg class="a g" style="left:866px;top:488px" width="53" height="56" viewBox="-1 -1 53 56"><path d="M-0.8 2.3 L2.3 -0.8 H48.7 L51.8 2.3 V55 H-0.8 Z" fill="#fafafa"/><g clip-path="url(#tc)"><rect x="0" y="0" width="51" height="55" fill="#000"/><defs><linearGradient id="u6" x1="0" y1="0" x2="0" y2="1"><stop offset="0" stop-color="#000" stop-opacity="0"/><stop offset="0.25" stop-color="#000" stop-opacity="0.12"/><stop offset="0.72" stop-color="#000" stop-opacity="0.9"/><stop offset="1" stop-color="#000" stop-opacity="1"/></linearGradient></defs><path d="M0 33.2 Q12 30.5 25.5 29.5 Q39 30.5 51 33.2 V47 H0 Z" fill="url(#hl3)"/><path d="M0 31 H51 V47.5 H0 Z" fill="url(#u6)"/><path d="M0 32.1 L25.5 27.3 L51 32.1 L51 34.4 Q39 31.4 25.5 30.8 Q12 31.4 0 34.4 Z" fill="url(#hl)" filter="url(#b03)"/><path d="M12 31.4 L25.5 28 L39 31.4 Q25.5 29.9 12 31.4 Z" fill="#30f4ee" filter="url(#b05)"/></g><text x="5.4" y="9.3" font-size="10.4" fill="#9a9a9a" font-family="Liberation Sans, sans-serif">0</text></svg><span class="t" style="left:894.3px;top:553.6px;font-size:9.05px;color:#1c6fd6;font-weight:normal;transform:translate(-50%,-50%);-webkit-text-stroke:0.25px #1c6fd6;">Scene X</span><svg class="a" style="left:331px;top:619.6px" width="53" height="17" viewBox="-1 0 53 17"><path d="M0 3 Q0 0 3 0 H48 Q51 0 51 3 V16 H0 Z" fill="url(#lblg)"/></svg><svg class="a g" style="left:331px;top:564px" width="53" height="56" viewBox="-1 -1 53 56"><path d="M-0.8 2.3 L2.3 -0.8 H48.7 L51.8 2.3 V55 H-0.8 Z" fill="#fafafa"/><g clip-path="url(#tc)"><rect x="0" y="0" width="51" height="55" fill="#000"/><g transform="translate(25.3 28.6) rotate(-90)"><defs><linearGradient id="u7" gradientUnits="userSpaceOnUse" x1="0" y1="0" x2="0" y2="25.9"><stop offset="0" stop-color="#3cfff6"/><stop offset="0.25" stop-color="#2beae4"/><stop offset="0.6" stop-color="#20b8b8"/><stop offset="1" stop-color="#178a8d"/></linearGradient><linearGradient id="u7m" gradientUnits="userSpaceOnUse" x1="0" y1="0" x2="0" y2="25.9"><stop offset="0" stop-color="#1a78f0"/><stop offset="1" stop-color="#1562e7"/></linearGradient><linearGradient id="u7k" gradientUnits="userSpaceOnUse" x1="0" y1="0" x2="0" y2="25.9"><stop offset="0" stop-color="#80fffa" stop-opacity="1"/><stop offset="1" stop-color="#40f0f0" stop-opacity="0"/></linearGradient><clipPath id="u7c"><path d="M0 -0.8 L-24.8 25.9 L24.8 25.9 Z"/></clipPath></defs><g clip-path="url(#u7c)"><path d="M0 -1 L-25.4 25.9 L25.4 25.9 Z" fill="#1422ff"/><g filter="url(#b08)"><path d="M0 0.5 L-22.45 27.9 L22.45 27.9 Z" fill="url(#u7m)"/><path d="M0 0.9 L-19.52 27.9 L19.52 27.9 Z" fill="url(#u7)"/></g><path d="M0 0 L-3.9 15.54 L3.9 15.54 Z" fill="url(#u7k)" filter="url(#b08)"/></g></g><rect x="50.2" y="8" width="0.8" height="41" fill="#30e8e8" opacity="0.75"/></g><text x="5.4" y="9.3" font-size="10.4" fill="#9a9a9a" font-family="Liberation Sans, sans-serif">Q</text></svg><span class="t" style="left:359.3px;top:629.6px;font-size:9.05px;color:#1c6fd6;font-weight:normal;transform:translate(-50%,-50%);-webkit-text-stroke:0.25px #1c6fd6;">Scene X</span><svg class="a" style="left:390px;top:619.6px" width="53" height="17" viewBox="-1 0 53 17"><path d="M0 3 Q0 0 3 0 H48 Q51 0 51 3 V16 H0 Z" fill="url(#lblg)"/></svg><svg class="a g" style="left:390px;top:564px" width="53" height="56" viewBox="-1 -1 53 56"><path d="M-0.8 2.3 L2.3 -0.8 H48.7 L51.8 2.3 V55 H-0.8 Z" fill="#fafafa"/><g clip-path="url(#tc)"><rect x="0" y="0" width="51" height="55" fill="#000"/><g transform="translate(25.7 28.6) rotate(90)"><defs><linearGradient id="u8" gradientUnits="userSpaceOnUse" x1="0" y1="0" x2="0" y2="25.9"><stop offset="0" stop-color="#3cfff6"/><stop offset="0.25" stop-color="#2beae4"/><stop offset="0.6" stop-color="#20b8b8"/><stop offset="1" stop-color="#178a8d"/></linearGradient><linearGradient id="u8m" gradientUnits="userSpaceOnUse" x1="0" y1="0" x2="0" y2="25.9"><stop offset="0" stop-color="#1a78f0"/><stop offset="1" stop-color="#1562e7"/></linearGradient><linearGradient id="u8k" gradientUnits="userSpaceOnUse" x1="0" y1="0" x2="0" y2="25.9"><stop offset="0" stop-color="#80fffa" stop-opacity="1"/><stop offset="1" stop-color="#40f0f0" stop-opacity="0"/></linearGradient><clipPath id="u8c"><path d="M0 -0.8 L-24.8 25.9 L24.8 25.9 Z"/></clipPath></defs><g clip-path="url(#u8c)"><path d="M0 -1 L-25.4 25.9 L25.4 25.9 Z" fill="#1422ff"/><g filter="url(#b08)"><path d="M0 0.5 L-22.45 27.9 L22.45 27.9 Z" fill="url(#u8m)"/><path d="M0 0.9 L-19.52 27.9 L19.52 27.9 Z" fill="url(#u8)"/></g><path d="M0 0 L-3.9 15.54 L3.9 15.54 Z" fill="url(#u8k)" filter="url(#b08)"/></g></g><rect x="0" y="8" width="0.8" height="41" fill="#30e8e8" opacity="0.75"/></g><text x="5.4" y="9.3" font-size="10.4" fill="#9a9a9a" font-family="Liberation Sans, sans-serif">W</text></svg><span class="t" style="left:418.3px;top:629.6px;font-size:9.05px;color:#1c6fd6;font-weight:normal;transform:translate(-50%,-50%);-webkit-text-stroke:0.25px #1c6fd6;">Scene X</span><svg class="a" style="left:450px;top:619.6px" width="53" height="17" viewBox="-1 0 53 17"><path d="M0 3 Q0 0 3 0 H48 Q51 0 51 3 V16 H0 Z" fill="url(#lblg)"/></svg><svg class="a g" style="left:450px;top:564px" width="53" height="56" viewBox="-1 -1 53 56"><path d="M-0.8 2.3 L2.3 -0.8 H48.7 L51.8 2.3 V55 H-0.8 Z" fill="#fafafa"/><g clip-path="url(#tc)"><rect x="0" y="0" width="51" height="55" fill="#000"/><g transform="translate(25.3 28.6) rotate(-90)"><defs><linearGradient id="u9" gradientUnits="userSpaceOnUse" x1="0" y1="0" x2="0" y2="25.9"><stop offset="0" stop-color="#3cfff6"/><stop offset="0.25" stop-color="#2beae4"/><stop offset="0.6" stop-color="#20b8b8"/><stop offset="1" stop-color="#178a8d"/></linearGradient><linearGradient id="u9m" gradientUnits="userSpaceOnUse" x1="0" y1="0" x2="0" y2="25.9"><stop offset="0" stop-color="#1a78f0"/><stop offset="1" stop-color="#1562e7"/></linearGradient><linearGradient id="u9k" gradientUnits="userSpaceOnUse" x1="0" y1="0" x2="0" y2="25.9"><stop offset="0" stop-color="#80fffa" stop-opacity="1"/><stop offset="1" stop-color="#40f0f0" stop-opacity="0"/></linearGradient><clipPath id="u9c"><path d="M0 -0.8 L-24.8 25.9 L24.8 25.9 Z"/></clipPath></defs><g clip-path="url(#u9c)"><path d="M0 -1 L-25.4 25.9 L25.4 25.9 Z" fill="#1422ff"/><g filter="url(#b08)"><path d="M0 0.5 L-22.45 27.9 L22.45 27.9 Z" fill="url(#u9m)"/><path d="M0 0.9 L-19.52 27.9 L19.52 27.9 Z" fill="url(#u9)"/></g><path d="M0 0 L-3.9 15.54 L3.9 15.54 Z" fill="url(#u9k)" filter="url(#b08)"/></g></g><rect x="50.2" y="8" width="0.8" height="41" fill="#30e8e8" opacity="0.75"/></g><text x="5.4" y="9.3" font-size="10.4" fill="#9a9a9a" font-family="Liberation Sans, sans-serif">E</text></svg><span class="t" style="left:478.3px;top:629.6px;font-size:9.05px;color:#1c6fd6;font-weight:normal;transform:translate(-50%,-50%);-webkit-text-stroke:0.25px #1c6fd6;">Scene X</span><svg class="a" style="left:509px;top:619.6px" width="53" height="17" viewBox="-1 0 53 17"><path d="M0 3 Q0 0 3 0 H48 Q51 0 51 3 V16 H0 Z" fill="url(#lblg)"/></svg><svg class="a g" style="left:509px;top:564px" width="53" height="56" viewBox="-1 -1 53 56"><path d="M-0.8 2.3 L2.3 -0.8 H48.7 L51.8 2.3 V55 H-0.8 Z" fill="#fafafa"/><g clip-path="url(#tc)"><rect x="0" y="0" width="51" height="55" fill="#000"/><g transform="translate(25.7 28.6) rotate(90)"><defs><linearGradient id="u10" gradientUnits="userSpaceOnUse" x1="0" y1="0" x2="0" y2="25.9"><stop offset="0" stop-color="#3cfff6"/><stop offset="0.25" stop-color="#2beae4"/><stop offset="0.6" stop-color="#20b8b8"/><stop offset="1" stop-color="#178a8d"/></linearGradient><linearGradient id="u10m" gradientUnits="userSpaceOnUse" x1="0" y1="0" x2="0" y2="25.9"><stop offset="0" stop-color="#1a78f0"/><stop offset="1" stop-color="#1562e7"/></linearGradient><linearGradient id="u10k" gradientUnits="userSpaceOnUse" x1="0" y1="0" x2="0" y2="25.9"><stop offset="0" stop-color="#80fffa" stop-opacity="1"/><stop offset="1" stop-color="#40f0f0" stop-opacity="0"/></linearGradient><clipPath id="u10c"><path d="M0 -0.8 L-24.8 25.9 L24.8 25.9 Z"/></clipPath></defs><g clip-path="url(#u10c)"><path d="M0 -1 L-25.4 25.9 L25.4 25.9 Z" fill="#1422ff"/><g filter="url(#b08)"><path d="M0 0.5 L-22.45 27.9 L22.45 27.9 Z" fill="url(#u10m)"/><path d="M0 0.9 L-19.52 27.9 L19.52 27.9 Z" fill="url(#u10)"/></g><path d="M0 0 L-3.9 15.54 L3.9 15.54 Z" fill="url(#u10k)" filter="url(#b08)"/></g></g><rect x="0" y="8" width="0.8" height="41" fill="#30e8e8" opacity="0.75"/></g><text x="5.4" y="9.3" font-size="10.4" fill="#9a9a9a" font-family="Liberation Sans, sans-serif">R</text></svg><span class="t" style="left:537.3px;top:629.6px;font-size:9.05px;color:#1c6fd6;font-weight:normal;transform:translate(-50%,-50%);-webkit-text-stroke:0.25px #1c6fd6;">Scene X</span><svg class="a" style="left:569px;top:619.6px" width="53" height="17" viewBox="-1 0 53 17"><path d="M0 3 Q0 0 3 0 H48 Q51 0 51 3 V16 H0 Z" fill="url(#lblg)"/></svg><svg class="a g" style="left:569px;top:564px" width="53" height="56" viewBox="-1 -1 53 56"><path d="M-0.8 2.3 L2.3 -0.8 H48.7 L51.8 2.3 V55 H-0.8 Z" fill="#fafafa"/><g clip-path="url(#tc)"><rect x="0" y="0" width="51" height="55" fill="#000"/><g transform="translate(25.5 27.8) rotate(0)"><defs><linearGradient id="u11" gradientUnits="userSpaceOnUse" x1="0" y1="0" x2="0" y2="25.4"><stop offset="0" stop-color="#3cfff6"/><stop offset="0.25" stop-color="#2beae4"/><stop offset="0.6" stop-color="#20b8b8"/><stop offset="1" stop-color="#178a8d"/></linearGradient><linearGradient id="u11m" gradientUnits="userSpaceOnUse" x1="0" y1="0" x2="0" y2="25.4"><stop offset="0" stop-color="#1a78f0"/><stop offset="1" stop-color="#1562e7"/></linearGradient><linearGradient id="u11k" gradientUnits="userSpaceOnUse" x1="0" y1="0" x2="0" y2="25.4"><stop offset="0" stop-color="#80fffa" stop-opacity="1"/><stop offset="1" stop-color="#40f0f0" stop-opacity="0"/></linearGradient><clipPath id="u11c"><path d="M0 -0.8 L-25.9 25.4 L25.9 25.4 Z"/></clipPath></defs><g clip-path="url(#u11c)"><path d="M0 -1 L-26.5 25.4 L26.5 25.4 Z" fill="#1422ff"/><g filter="url(#b08)"><path d="M0 0.5 L-23.46 27.4 L23.46 27.4 Z" fill="url(#u11m)"/><path d="M0 0.9 L-20.4 27.4 L20.4 27.4 Z" fill="url(#u11)"/></g><path d="M0 0 L-4.08 15.24 L4.08 15.24 Z" fill="url(#u11k)" filter="url(#b08)"/></g></g><rect x="4" y="52.9" width="43" height="1.5" fill="#28e6ea"/><rect x="0" y="53" width="4" height="2" fill="#000"/><rect x="47" y="53" width="4" height="2" fill="#000"/></g><text x="5.4" y="9.3" font-size="10.4" fill="#9a9a9a" font-family="Liberation Sans, sans-serif">T</text></svg><span class="t" style="left:597.3px;top:629.6px;font-size:9.05px;color:#1c6fd6;font-weight:normal;transform:translate(-50%,-50%);-webkit-text-stroke:0.25px #1c6fd6;">Scene X</span><svg class="a" style="left:628px;top:619.6px" width="53" height="17" viewBox="-1 0 53 17"><path d="M0 3 Q0 0 3 0 H48 Q51 0 51 3 V16 H0 Z" fill="url(#lblg)"/></svg><svg class="a g" style="left:628px;top:564px" width="53" height="56" viewBox="-1 -1 53 56"><path d="M-0.8 2.3 L2.3 -0.8 H48.7 L51.8 2.3 V55 H-0.8 Z" fill="#fafafa"/><g clip-path="url(#tc)"><rect x="0" y="0" width="51" height="55" fill="#000"/><g filter="url(#b05)"><polygon points="31.1,8 46.5,33.6 20.1,49.7 4.8,23.4" fill="#fff" opacity="0.04"/><polygon points="30.59,9.6 44.81,33.16 20.55,48.01 6.42,23.84" fill="#fff" opacity="0.06"/><polygon points="30.08,11.18 43.15,32.73 20.99,46.35 8.02,24.27" fill="#fff" opacity="0.07"/><polygon points="29.57,12.74 41.5,32.3 21.43,44.7 9.6,24.7" fill="#fff" opacity="0.08"/><polygon points="29.08,14.28 39.88,31.88 21.86,43.08 11.16,25.12" fill="#fff" opacity="0.09"/><polygon points="28.59,15.79 38.28,31.47 22.29,41.48 12.7,25.53" fill="#fff" opacity="0.1"/><polygon points="28.12,17.27 36.72,31.06 22.7,39.92 14.2,25.94" fill="#fff" opacity="0.11"/><polygon points="27.65,18.72 35.2,30.66 23.11,38.4 15.66,26.34" fill="#fff" opacity="0.12"/><polygon points="27.2,20.11 33.72,30.28 23.5,36.92 17.08,26.72" fill="#fff" opacity="0.13"/><polygon points="26.77,21.44 32.32,29.92 23.87,35.52 18.42,27.08" fill="#fff" opacity="0.14"/></g><g filter="url(#b08)"><polygon points="27.45,22.94 30.96,8.44 25.35,22.26" fill="#fff" opacity="0.2"/><polygon points="28.7,23.34 28.98,14.57 24.1,21.86" fill="#fff" opacity="0.16"/><polygon points="30.82,30.66 46.04,33.48 31.38,28.54" fill="#fff" opacity="0.2"/><polygon points="30.49,31.94 39.57,31.8 31.71,27.26" fill="#fff" opacity="0.16"/><polygon points="23.14,34.02 20.22,49.24 25.26,34.58" fill="#fff" opacity="0.2"/><polygon points="21.86,33.68 21.95,42.77 26.54,34.92" fill="#fff" opacity="0.16"/><polygon points="19.89,26.34 5.24,23.52 19.31,28.46" fill="#fff" opacity="0.2"/><polygon points="20.23,25.06 11.46,25.2 18.97,29.74" fill="#fff" opacity="0.16"/></g><circle cx="25.4" cy="28.5" r="9" fill="url(#rg0)" opacity="0.6"/><polygon points="26.4,22.6 31.1,29.6 24.2,34.3 19.6,27.4" fill="#fff" filter="url(#b03)"/><polygon points="26.06,24.61 29.16,29.23 24.61,32.33 21.57,27.77" fill="none" stroke="#c8c8c8" stroke-width="0.55"/></g><text x="5.4" y="9.3" font-size="10.4" fill="#9a9a9a" font-family="Liberation Sans, sans-serif">Y</text></svg><span class="t" style="left:656.3px;top:629.6px;font-size:9.05px;color:#1c6fd6;font-weight:normal;transform:translate(-50%,-50%);-webkit-text-stroke:0.25px #1c6fd6;">Scene P</span><svg class="a" style="left:688px;top:619.6px" width="53" height="17" viewBox="-1 0 53 17"><path d="M0 3 Q0 0 3 0 H48 Q51 0 51 3 V16 H0 Z" fill="url(#lblg)"/></svg><svg class="a g" style="left:688px;top:564px" width="53" height="56" viewBox="-1 -1 53 56"><path d="M-0.8 2.3 L2.3 -0.8 H48.7 L51.8 2.3 V55 H-0.8 Z" fill="#fafafa"/><g clip-path="url(#tc)"><rect x="0" y="0" width="51" height="55" fill="#000"/><g filter="url(#b05)"><polygon points="31.1,8 46.5,33.6 20.1,49.7 4.8,23.4" fill="#fff" opacity="0.04"/><polygon points="30.59,9.6 44.81,33.16 20.55,48.01 6.42,23.84" fill="#fff" opacity="0.06"/><polygon points="30.08,11.18 43.15,32.73 20.99,46.35 8.02,24.27" fill="#fff" opacity="0.07"/><polygon points="29.57,12.74 41.5,32.3 21.43,44.7 9.6,24.7" fill="#fff" opacity="0.08"/><polygon points="29.08,14.28 39.88,31.88 21.86,43.08 11.16,25.12" fill="#fff" opacity="0.09"/><polygon points="28.59,15.79 38.28,31.47 22.29,41.48 12.7,25.53" fill="#fff" opacity="0.1"/><polygon points="28.12,17.27 36.72,31.06 22.7,39.92 14.2,25.94" fill="#fff" opacity="0.11"/><polygon points="27.65,18.72 35.2,30.66 23.11,38.4 15.66,26.34" fill="#fff" opacity="0.12"/><polygon points="27.2,20.11 33.72,30.28 23.5,36.92 17.08,26.72" fill="#fff" opacity="0.13"/><polygon points="26.77,21.44 32.32,29.92 23.87,35.52 18.42,27.08" fill="#fff" opacity="0.14"/></g><g filter="url(#b08)"><polygon points="27.45,22.94 30.96,8.44 25.35,22.26" fill="#fff" opacity="0.2"/><polygon points="28.7,23.34 28.98,14.57 24.1,21.86" fill="#fff" opacity="0.16"/><polygon points="30.82,30.66 46.04,33.48 31.38,28.54" fill="#fff" opacity="0.2"/><polygon points="30.49,31.94 39.57,31.8 31.71,27.26" fill="#fff" opacity="0.16"/><polygon points="23.14,34.02 20.22,49.24 25.26,34.58" fill="#fff" opacity="0.2"/><polygon points="21.86,33.68 21.95,42.77 26.54,34.92" fill="#fff" opacity="0.16"/><polygon points="19.89,26.34 5.24,23.52 19.31,28.46" fill="#fff" opacity="0.2"/><polygon points="20.23,25.06 11.46,25.2 18.97,29.74" fill="#fff" opacity="0.16"/></g><circle cx="25.4" cy="28.5" r="9" fill="url(#rg0)" opacity="0.6"/><polygon points="26.4,22.6 31.1,29.6 24.2,34.3 19.6,27.4" fill="#fff" filter="url(#b03)"/><polygon points="26.06,24.61 29.16,29.23 24.61,32.33 21.57,27.77" fill="none" stroke="#c8c8c8" stroke-width="0.55"/></g><text x="5.4" y="9.3" font-size="10.4" fill="#9a9a9a" font-family="Liberation Sans, sans-serif">U</text></svg><span class="t" style="left:716.3px;top:629.6px;font-size:9.05px;color:#1c6fd6;font-weight:normal;transform:translate(-50%,-50%);-webkit-text-stroke:0.25px #1c6fd6;">Scene P</span><svg class="a" style="left:747px;top:619.6px" width="53" height="17" viewBox="-1 0 53 17"><path d="M0 3 Q0 0 3 0 H48 Q51 0 51 3 V16 H0 Z" fill="url(#lblg)"/></svg><svg class="a g" style="left:747px;top:564px" width="53" height="56" viewBox="-1 -1 53 56"><path d="M-0.8 2.3 L2.3 -0.8 H48.7 L51.8 2.3 V55 H-0.8 Z" fill="#fafafa"/><g clip-path="url(#tc)"><rect x="0" y="0" width="51" height="55" fill="#000"/><g filter="url(#b05)"><polygon points="31.1,8 46.5,33.6 20.1,49.7 4.8,23.4" fill="#fff" opacity="0.04"/><polygon points="30.59,9.6 44.81,33.16 20.55,48.01 6.42,23.84" fill="#fff" opacity="0.06"/><polygon points="30.08,11.18 43.15,32.73 20.99,46.35 8.02,24.27" fill="#fff" opacity="0.07"/><polygon points="29.57,12.74 41.5,32.3 21.43,44.7 9.6,24.7" fill="#fff" opacity="0.08"/><polygon points="29.08,14.28 39.88,31.88 21.86,43.08 11.16,25.12" fill="#fff" opacity="0.09"/><polygon points="28.59,15.79 38.28,31.47 22.29,41.48 12.7,25.53" fill="#fff" opacity="0.1"/><polygon points="28.12,17.27 36.72,31.06 22.7,39.92 14.2,25.94" fill="#fff" opacity="0.11"/><polygon points="27.65,18.72 35.2,30.66 23.11,38.4 15.66,26.34" fill="#fff" opacity="0.12"/><polygon points="27.2,20.11 33.72,30.28 23.5,36.92 17.08,26.72" fill="#fff" opacity="0.13"/><polygon points="26.77,21.44 32.32,29.92 23.87,35.52 18.42,27.08" fill="#fff" opacity="0.14"/></g><g filter="url(#b08)"><polygon points="27.45,22.94 30.96,8.44 25.35,22.26" fill="#fff" opacity="0.2"/><polygon points="28.7,23.34 28.98,14.57 24.1,21.86" fill="#fff" opacity="0.16"/><polygon points="30.82,30.66 46.04,33.48 31.38,28.54" fill="#fff" opacity="0.2"/><polygon points="30.49,31.94 39.57,31.8 31.71,27.26" fill="#fff" opacity="0.16"/><polygon points="23.14,34.02 20.22,49.24 25.26,34.58" fill="#fff" opacity="0.2"/><polygon points="21.86,33.68 21.95,42.77 26.54,34.92" fill="#fff" opacity="0.16"/><polygon points="19.89,26.34 5.24,23.52 19.31,28.46" fill="#fff" opacity="0.2"/><polygon points="20.23,25.06 11.46,25.2 18.97,29.74" fill="#fff" opacity="0.16"/></g><circle cx="25.4" cy="28.5" r="9" fill="url(#rg0)" opacity="0.6"/><polygon points="26.4,22.6 31.1,29.6 24.2,34.3 19.6,27.4" fill="#fff" filter="url(#b03)"/><polygon points="26.06,24.61 29.16,29.23 24.61,32.33 21.57,27.77" fill="none" stroke="#c8c8c8" stroke-width="0.55"/></g><text x="5.4" y="9.3" font-size="10.4" fill="#9a9a9a" font-family="Liberation Sans, sans-serif">I</text></svg><span class="t" style="left:775.3px;top:629.6px;font-size:9.05px;color:#1c6fd6;font-weight:normal;transform:translate(-50%,-50%);-webkit-text-stroke:0.25px #1c6fd6;">Scene P</span><svg class="a" style="left:807px;top:619.6px" width="53" height="17" viewBox="-1 0 53 17"><path d="M0 3 Q0 0 3 0 H48 Q51 0 51 3 V16 H0 Z" fill="url(#lblg)"/></svg><svg class="a g" style="left:807px;top:564px" width="53" height="56" viewBox="-1 -1 53 56"><path d="M-0.8 2.3 L2.3 -0.8 H48.7 L51.8 2.3 V55 H-0.8 Z" fill="#fafafa"/><g clip-path="url(#tc)"><rect x="0" y="0" width="51" height="55" fill="#000"/><g filter="url(#b05)"><polygon points="31.1,8 46.5,33.6 20.1,49.7 4.8,23.4" fill="#fff" opacity="0.04"/><polygon points="30.59,9.6 44.81,33.16 20.55,48.01 6.42,23.84" fill="#fff" opacity="0.06"/><polygon points="30.08,11.18 43.15,32.73 20.99,46.35 8.02,24.27" fill="#fff" opacity="0.07"/><polygon points="29.57,12.74 41.5,32.3 21.43,44.7 9.6,24.7" fill="#fff" opacity="0.08"/><polygon points="29.08,14.28 39.88,31.88 21.86,43.08 11.16,25.12" fill="#fff" opacity="0.09"/><polygon points="28.59,15.79 38.28,31.47 22.29,41.48 12.7,25.53" fill="#fff" opacity="0.1"/><polygon points="28.12,17.27 36.72,31.06 22.7,39.92 14.2,25.94" fill="#fff" opacity="0.11"/><polygon points="27.65,18.72 35.2,30.66 23.11,38.4 15.66,26.34" fill="#fff" opacity="0.12"/><polygon points="27.2,20.11 33.72,30.28 23.5,36.92 17.08,26.72" fill="#fff" opacity="0.13"/><polygon points="26.77,21.44 32.32,29.92 23.87,35.52 18.42,27.08" fill="#fff" opacity="0.14"/></g><g filter="url(#b08)"><polygon points="27.45,22.94 30.96,8.44 25.35,22.26" fill="#fff" opacity="0.2"/><polygon points="28.7,23.34 28.98,14.57 24.1,21.86" fill="#fff" opacity="0.16"/><polygon points="30.82,30.66 46.04,33.48 31.38,28.54" fill="#fff" opacity="0.2"/><polygon points="30.49,31.94 39.57,31.8 31.71,27.26" fill="#fff" opacity="0.16"/><polygon points="23.14,34.02 20.22,49.24 25.26,34.58" fill="#fff" opacity="0.2"/><polygon points="21.86,33.68 21.95,42.77 26.54,34.92" fill="#fff" opacity="0.16"/><polygon points="19.89,26.34 5.24,23.52 19.31,28.46" fill="#fff" opacity="0.2"/><polygon points="20.23,25.06 11.46,25.2 18.97,29.74" fill="#fff" opacity="0.16"/></g><circle cx="25.4" cy="28.5" r="9" fill="url(#rg0)" opacity="0.6"/><polygon points="26.4,22.6 31.1,29.6 24.2,34.3 19.6,27.4" fill="#fff" filter="url(#b03)"/><polygon points="26.06,24.61 29.16,29.23 24.61,32.33 21.57,27.77" fill="none" stroke="#c8c8c8" stroke-width="0.55"/></g><text x="5.4" y="9.3" font-size="10.4" fill="#9a9a9a" font-family="Liberation Sans, sans-serif">O</text></svg><span class="t" style="left:835.3px;top:629.6px;font-size:9.05px;color:#1c6fd6;font-weight:normal;transform:translate(-50%,-50%);-webkit-text-stroke:0.25px #1c6fd6;">Scene P</span><svg class="a" style="left:866px;top:619.6px" width="53" height="17" viewBox="-1 0 53 17"><path d="M0 3 Q0 0 3 0 H48 Q51 0 51 3 V16 H0 Z" fill="url(#lblg)"/></svg><svg class="a g" style="left:866px;top:564px" width="53" height="56" viewBox="-1 -1 53 56"><path d="M-0.8 2.3 L2.3 -0.8 H48.7 L51.8 2.3 V55 H-0.8 Z" fill="#fafafa"/><g clip-path="url(#tc)"><rect x="0" y="0" width="51" height="55" fill="#000"/><g filter="url(#b05)"><polygon points="31.1,8 46.5,33.6 20.1,49.7 4.8,23.4" fill="#fff" opacity="0.04"/><polygon points="30.59,9.6 44.81,33.16 20.55,48.01 6.42,23.84" fill="#fff" opacity="0.06"/><polygon points="30.08,11.18 43.15,32.73 20.99,46.35 8.02,24.27" fill="#fff" opacity="0.07"/><polygon points="29.57,12.74 41.5,32.3 21.43,44.7 9.6,24.7" fill="#fff" opacity="0.08"/><polygon points="29.08,14.28 39.88,31.88 21.86,43.08 11.16,25.12" fill="#fff" opacity="0.09"/><polygon points="28.59,15.79 38.28,31.47 22.29,41.48 12.7,25.53" fill="#fff" opacity="0.1"/><polygon points="28.12,17.27 36.72,31.06 22.7,39.92 14.2,25.94" fill="#fff" opacity="0.11"/><polygon points="27.65,18.72 35.2,30.66 23.11,38.4 15.66,26.34" fill="#fff" opacity="0.12"/><polygon points="27.2,20.11 33.72,30.28 23.5,36.92 17.08,26.72" fill="#fff" opacity="0.13"/><polygon points="26.77,21.44 32.32,29.92 23.87,35.52 18.42,27.08" fill="#fff" opacity="0.14"/></g><g filter="url(#b08)"><polygon points="27.45,22.94 30.96,8.44 25.35,22.26" fill="#fff" opacity="0.2"/><polygon points="28.7,23.34 28.98,14.57 24.1,21.86" fill="#fff" opacity="0.16"/><polygon points="30.82,30.66 46.04,33.48 31.38,28.54" fill="#fff" opacity="0.2"/><polygon points="30.49,31.94 39.57,31.8 31.71,27.26" fill="#fff" opacity="0.16"/><polygon points="23.14,34.02 20.22,49.24 25.26,34.58" fill="#fff" opacity="0.2"/><polygon points="21.86,33.68 21.95,42.77 26.54,34.92" fill="#fff" opacity="0.16"/><polygon points="19.89,26.34 5.24,23.52 19.31,28.46" fill="#fff" opacity="0.2"/><polygon points="20.23,25.06 11.46,25.2 18.97,29.74" fill="#fff" opacity="0.16"/></g><circle cx="25.4" cy="28.5" r="9" fill="url(#rg0)" opacity="0.6"/><polygon points="26.4,22.6 31.1,29.6 24.2,34.3 19.6,27.4" fill="#fff" filter="url(#b03)"/><polygon points="26.06,24.61 29.16,29.23 24.61,32.33 21.57,27.77" fill="none" stroke="#c8c8c8" stroke-width="0.55"/></g><text x="5.4" y="9.3" font-size="10.4" fill="#9a9a9a" font-family="Liberation Sans, sans-serif">P</text></svg><span class="t" style="left:894.3px;top:629.6px;font-size:9.05px;color:#1c6fd6;font-weight:normal;transform:translate(-50%,-50%);-webkit-text-stroke:0.25px #1c6fd6;">Scene P</span><svg class="a" style="left:331px;top:695.6px" width="53" height="17" viewBox="-1 0 53 17"><path d="M0 3 Q0 0 3 0 H48 Q51 0 51 3 V16 H0 Z" fill="url(#lblg)"/></svg><svg class="a g" style="left:331px;top:640px" width="53" height="56" viewBox="-1 -1 53 56"><path d="M-0.8 2.3 L2.3 -0.8 H48.7 L51.8 2.3 V55 H-0.8 Z" fill="#fafafa"/><g clip-path="url(#tc)"><rect x="0" y="0" width="51" height="55" fill="#000"/><g filter="url(#b05)"><polygon points="31.1,8 46.5,33.6 20.1,49.7 4.8,23.4" fill="#fff" opacity="0.04"/><polygon points="30.59,9.6 44.81,33.16 20.55,48.01 6.42,23.84" fill="#fff" opacity="0.06"/><polygon points="30.08,11.18 43.15,32.73 20.99,46.35 8.02,24.27" fill="#fff" opacity="0.07"/><polygon points="29.57,12.74 41.5,32.3 21.43,44.7 9.6,24.7" fill="#fff" opacity="0.08"/><polygon points="29.08,14.28 39.88,31.88 21.86,43.08 11.16,25.12" fill="#fff" opacity="0.09"/><polygon points="28.59,15.79 38.28,31.47 22.29,41.48 12.7,25.53" fill="#fff" opacity="0.1"/><polygon points="28.12,17.27 36.72,31.06 22.7,39.92 14.2,25.94" fill="#fff" opacity="0.11"/><polygon points="27.65,18.72 35.2,30.66 23.11,38.4 15.66,26.34" fill="#fff" opacity="0.12"/><polygon points="27.2,20.11 33.72,30.28 23.5,36.92 17.08,26.72" fill="#fff" opacity="0.13"/><polygon points="26.77,21.44 32.32,29.92 23.87,35.52 18.42,27.08" fill="#fff" opacity="0.14"/></g><g filter="url(#b08)"><polygon points="27.45,22.94 30.96,8.44 25.35,22.26" fill="#fff" opacity="0.2"/><polygon points="28.7,23.34 28.98,14.57 24.1,21.86" fill="#fff" opacity="0.16"/><polygon points="30.82,30.66 46.04,33.48 31.38,28.54" fill="#fff" opacity="0.2"/><polygon points="30.49,31.94 39.57,31.8 31.71,27.26" fill="#fff" opacity="0.16"/><polygon points="23.14,34.02 20.22,49.24 25.26,34.58" fill="#fff" opacity="0.2"/><polygon points="21.86,33.68 21.95,42.77 26.54,34.92" fill="#fff" opacity="0.16"/><polygon points="19.89,26.34 5.24,23.52 19.31,28.46" fill="#fff" opacity="0.2"/><polygon points="20.23,25.06 11.46,25.2 18.97,29.74" fill="#fff" opacity="0.16"/></g><circle cx="25.4" cy="28.5" r="9" fill="url(#rg0)" opacity="0.6"/><polygon points="26.4,22.6 31.1,29.6 24.2,34.3 19.6,27.4" fill="#fff" filter="url(#b03)"/><polygon points="26.06,24.61 29.16,29.23 24.61,32.33 21.57,27.77" fill="none" stroke="#c8c8c8" stroke-width="0.55"/></g><text x="5.4" y="9.3" font-size="10.4" fill="#9a9a9a" font-family="Liberation Sans, sans-serif">A</text></svg><span class="t" style="left:359.3px;top:705.6px;font-size:9.05px;color:#1c6fd6;font-weight:normal;transform:translate(-50%,-50%);-webkit-text-stroke:0.25px #1c6fd6;">Scene P</span><svg class="a" style="left:390px;top:695.6px" width="53" height="17" viewBox="-1 0 53 17"><path d="M0 3 Q0 0 3 0 H48 Q51 0 51 3 V16 H0 Z" fill="url(#lblg)"/></svg><svg class="a g" style="left:390px;top:640px" width="53" height="56" viewBox="-1 -1 53 56"><path d="M-0.8 2.3 L2.3 -0.8 H48.7 L51.8 2.3 V55 H-0.8 Z" fill="#fafafa"/><g clip-path="url(#tc)"><rect x="0" y="0" width="51" height="55" fill="#000"/><g filter="url(#b05)"><polygon points="31.1,8 46.5,33.6 20.1,49.7 4.8,23.4" fill="#fff" opacity="0.04"/><polygon points="30.59,9.6 44.81,33.16 20.55,48.01 6.42,23.84" fill="#fff" opacity="0.06"/><polygon points="30.08,11.18 43.15,32.73 20.99,46.35 8.02,24.27" fill="#fff" opacity="0.07"/><polygon points="29.57,12.74 41.5,32.3 21.43,44.7 9.6,24.7" fill="#fff" opacity="0.08"/><polygon points="29.08,14.28 39.88,31.88 21.86,43.08 11.16,25.12" fill="#fff" opacity="0.09"/><polygon points="28.59,15.79 38.28,31.47 22.29,41.48 12.7,25.53" fill="#fff" opacity="0.1"/><polygon points="28.12,17.27 36.72,31.06 22.7,39.92 14.2,25.94" fill="#fff" opacity="0.11"/><polygon points="27.65,18.72 35.2,30.66 23.11,38.4 15.66,26.34" fill="#fff" opacity="0.12"/><polygon points="27.2,20.11 33.72,30.28 23.5,36.92 17.08,26.72" fill="#fff" opacity="0.13"/><polygon points="26.77,21.44 32.32,29.92 23.87,35.52 18.42,27.08" fill="#fff" opacity="0.14"/></g><g filter="url(#b08)"><polygon points="27.45,22.94 30.96,8.44 25.35,22.26" fill="#fff" opacity="0.2"/><polygon points="28.7,23.34 28.98,14.57 24.1,21.86" fill="#fff" opacity="0.16"/><polygon points="30.82,30.66 46.04,33.48 31.38,28.54" fill="#fff" opacity="0.2"/><polygon points="30.49,31.94 39.57,31.8 31.71,27.26" fill="#fff" opacity="0.16"/><polygon points="23.14,34.02 20.22,49.24 25.26,34.58" fill="#fff" opacity="0.2"/><polygon points="21.86,33.68 21.95,42.77 26.54,34.92" fill="#fff" opacity="0.16"/><polygon points="19.89,26.34 5.24,23.52 19.31,28.46" fill="#fff" opacity="0.2"/><polygon points="20.23,25.06 11.46,25.2 18.97,29.74" fill="#fff" opacity="0.16"/></g><circle cx="25.4" cy="28.5" r="9" fill="url(#rg0)" opacity="0.6"/><polygon points="26.4,22.6 31.1,29.6 24.2,34.3 19.6,27.4" fill="#fff" filter="url(#b03)"/><polygon points="26.06,24.61 29.16,29.23 24.61,32.33 21.57,27.77" fill="none" stroke="#c8c8c8" stroke-width="0.55"/></g><text x="5.4" y="9.3" font-size="10.4" fill="#9a9a9a" font-family="Liberation Sans, sans-serif">S</text></svg><span class="t" style="left:418.3px;top:705.6px;font-size:9.05px;color:#1c6fd6;font-weight:normal;transform:translate(-50%,-50%);-webkit-text-stroke:0.25px #1c6fd6;">Scene P</span><svg class="a" style="left:450px;top:695.6px" width="53" height="17" viewBox="-1 0 53 17"><path d="M0 3 Q0 0 3 0 H48 Q51 0 51 3 V16 H0 Z" fill="url(#lblg)"/></svg><svg class="a g" style="left:450px;top:640px" width="53" height="56" viewBox="-1 -1 53 56"><path d="M-0.8 2.3 L2.3 -0.8 H48.7 L51.8 2.3 V55 H-0.8 Z" fill="#fafafa"/><g clip-path="url(#tc)"><rect x="0" y="0" width="51" height="55" fill="#000"/><g filter="url(#b05)"><polygon points="31.1,8 46.5,33.6 20.1,49.7 4.8,23.4" fill="#fff" opacity="0.04"/><polygon points="30.59,9.6 44.81,33.16 20.55,48.01 6.42,23.84" fill="#fff" opacity="0.06"/><polygon points="30.08,11.18 43.15,32.73 20.99,46.35 8.02,24.27" fill="#fff" opacity="0.07"/><polygon points="29.57,12.74 41.5,32.3 21.43,44.7 9.6,24.7" fill="#fff" opacity="0.08"/><polygon points="29.08,14.28 39.88,31.88 21.86,43.08 11.16,25.12" fill="#fff" opacity="0.09"/><polygon points="28.59,15.79 38.28,31.47 22.29,41.48 12.7,25.53" fill="#fff" opacity="0.1"/><polygon points="28.12,17.27 36.72,31.06 22.7,39.92 14.2,25.94" fill="#fff" opacity="0.11"/><polygon points="27.65,18.72 35.2,30.66 23.11,38.4 15.66,26.34" fill="#fff" opacity="0.12"/><polygon points="27.2,20.11 33.72,30.28 23.5,36.92 17.08,26.72" fill="#fff" opacity="0.13"/><polygon points="26.77,21.44 32.32,29.92 23.87,35.52 18.42,27.08" fill="#fff" opacity="0.14"/></g><g filter="url(#b08)"><polygon points="27.45,22.94 30.96,8.44 25.35,22.26" fill="#fff" opacity="0.2"/><polygon points="28.7,23.34 28.98,14.57 24.1,21.86" fill="#fff" opacity="0.16"/><polygon points="30.82,30.66 46.04,33.48 31.38,28.54" fill="#fff" opacity="0.2"/><polygon points="30.49,31.94 39.57,31.8 31.71,27.26" fill="#fff" opacity="0.16"/><polygon points="23.14,34.02 20.22,49.24 25.26,34.58" fill="#fff" opacity="0.2"/><polygon points="21.86,33.68 21.95,42.77 26.54,34.92" fill="#fff" opacity="0.16"/><polygon points="19.89,26.34 5.24,23.52 19.31,28.46" fill="#fff" opacity="0.2"/><polygon points="20.23,25.06 11.46,25.2 18.97,29.74" fill="#fff" opacity="0.16"/></g><circle cx="25.4" cy="28.5" r="9" fill="url(#rg0)" opacity="0.6"/><polygon points="26.4,22.6 31.1,29.6 24.2,34.3 19.6,27.4" fill="#fff" filter="url(#b03)"/><polygon points="26.06,24.61 29.16,29.23 24.61,32.33 21.57,27.77" fill="none" stroke="#c8c8c8" stroke-width="0.55"/></g><text x="5.4" y="9.3" font-size="10.4" fill="#9a9a9a" font-family="Liberation Sans, sans-serif">D</text></svg><span class="t" style="left:478.3px;top:705.6px;font-size:9.05px;color:#1c6fd6;font-weight:normal;transform:translate(-50%,-50%);-webkit-text-stroke:0.25px #1c6fd6;">Scene P</span><svg class="a" style="left:509px;top:695.6px" width="53" height="17" viewBox="-1 0 53 17"><path d="M0 3 Q0 0 3 0 H48 Q51 0 51 3 V16 H0 Z" fill="url(#lblg)"/></svg><svg class="a g" style="left:509px;top:640px" width="53" height="56" viewBox="-1 -1 53 56"><path d="M-0.8 2.3 L2.3 -0.8 H48.7 L51.8 2.3 V55 H-0.8 Z" fill="#fafafa"/><g clip-path="url(#tc)"><rect x="0" y="0" width="51" height="55" fill="#000"/><g filter="url(#b05)"><polygon points="31.1,8 46.5,33.6 20.1,49.7 4.8,23.4" fill="#fff" opacity="0.04"/><polygon points="30.59,9.6 44.81,33.16 20.55,48.01 6.42,23.84" fill="#fff" opacity="0.06"/><polygon points="30.08,11.18 43.15,32.73 20.99,46.35 8.02,24.27" fill="#fff" opacity="0.07"/><polygon points="29.57,12.74 41.5,32.3 21.43,44.7 9.6,24.7" fill="#fff" opacity="0.08"/><polygon points="29.08,14.28 39.88,31.88 21.86,43.08 11.16,25.12" fill="#fff" opacity="0.09"/><polygon points="28.59,15.79 38.28,31.47 22.29,41.48 12.7,25.53" fill="#fff" opacity="0.1"/><polygon points="28.12,17.27 36.72,31.06 22.7,39.92 14.2,25.94" fill="#fff" opacity="0.11"/><polygon points="27.65,18.72 35.2,30.66 23.11,38.4 15.66,26.34" fill="#fff" opacity="0.12"/><polygon points="27.2,20.11 33.72,30.28 23.5,36.92 17.08,26.72" fill="#fff" opacity="0.13"/><polygon points="26.77,21.44 32.32,29.92 23.87,35.52 18.42,27.08" fill="#fff" opacity="0.14"/></g><g filter="url(#b08)"><polygon points="27.45,22.94 30.96,8.44 25.35,22.26" fill="#fff" opacity="0.2"/><polygon points="28.7,23.34 28.98,14.57 24.1,21.86" fill="#fff" opacity="0.16"/><polygon points="30.82,30.66 46.04,33.48 31.38,28.54" fill="#fff" opacity="0.2"/><polygon points="30.49,31.94 39.57,31.8 31.71,27.26" fill="#fff" opacity="0.16"/><polygon points="23.14,34.02 20.22,49.24 25.26,34.58" fill="#fff" opacity="0.2"/><polygon points="21.86,33.68 21.95,42.77 26.54,34.92" fill="#fff" opacity="0.16"/><polygon points="19.89,26.34 5.24,23.52 19.31,28.46" fill="#fff" opacity="0.2"/><polygon points="20.23,25.06 11.46,25.2 18.97,29.74" fill="#fff" opacity="0.16"/></g><circle cx="25.4" cy="28.5" r="9" fill="url(#rg0)" opacity="0.6"/><polygon points="26.4,22.6 31.1,29.6 24.2,34.3 19.6,27.4" fill="#fff" filter="url(#b03)"/><polygon points="26.06,24.61 29.16,29.23 24.61,32.33 21.57,27.77" fill="none" stroke="#c8c8c8" stroke-width="0.55"/></g><text x="5.4" y="9.3" font-size="10.4" fill="#9a9a9a" font-family="Liberation Sans, sans-serif">F</text></svg><span class="t" style="left:537.3px;top:705.6px;font-size:9.05px;color:#1c6fd6;font-weight:normal;transform:translate(-50%,-50%);-webkit-text-stroke:0.25px #1c6fd6;">Scene P</span><svg class="a" style="left:569px;top:695.6px" width="53" height="17" viewBox="-1 0 53 17"><path d="M0 3 Q0 0 3 0 H48 Q51 0 51 3 V16 H0 Z" fill="url(#lblg)"/></svg><svg class="a g" style="left:569px;top:640px" width="53" height="56" viewBox="-1 -1 53 56"><path d="M-0.8 2.3 L2.3 -0.8 H48.7 L51.8 2.3 V55 H-0.8 Z" fill="#fafafa"/><g clip-path="url(#tc)"><rect x="0" y="0" width="51" height="55" fill="#000"/><g filter="url(#b05)"><polygon points="31.1,8 46.5,33.6 20.1,49.7 4.8,23.4" fill="#fff" opacity="0.04"/><polygon points="30.59,9.6 44.81,33.16 20.55,48.01 6.42,23.84" fill="#fff" opacity="0.06"/><polygon points="30.08,11.18 43.15,32.73 20.99,46.35 8.02,24.27" fill="#fff" opacity="0.07"/><polygon points="29.57,12.74 41.5,32.3 21.43,44.7 9.6,24.7" fill="#fff" opacity="0.08"/><polygon points="29.08,14.28 39.88,31.88 21.86,43.08 11.16,25.12" fill="#fff" opacity="0.09"/><polygon points="28.59,15.79 38.28,31.47 22.29,41.48 12.7,25.53" fill="#fff" opacity="0.1"/><polygon points="28.12,17.27 36.72,31.06 22.7,39.92 14.2,25.94" fill="#fff" opacity="0.11"/><polygon points="27.65,18.72 35.2,30.66 23.11,38.4 15.66,26.34" fill="#fff" opacity="0.12"/><polygon points="27.2,20.11 33.72,30.28 23.5,36.92 17.08,26.72" fill="#fff" opacity="0.13"/><polygon points="26.77,21.44 32.32,29.92 23.87,35.52 18.42,27.08" fill="#fff" opacity="0.14"/></g><g filter="url(#b08)"><polygon points="27.45,22.94 30.96,8.44 25.35,22.26" fill="#fff" opacity="0.2"/><polygon points="28.7,23.34 28.98,14.57 24.1,21.86" fill="#fff" opacity="0.16"/><polygon points="30.82,30.66 46.04,33.48 31.38,28.54" fill="#fff" opacity="0.2"/><polygon points="30.49,31.94 39.57,31.8 31.71,27.26" fill="#fff" opacity="0.16"/><polygon points="23.14,34.02 20.22,49.24 25.26,34.58" fill="#fff" opacity="0.2"/><polygon points="21.86,33.68 21.95,42.77 26.54,34.92" fill="#fff" opacity="0.16"/><polygon points="19.89,26.34 5.24,23.52 19.31,28.46" fill="#fff" opacity="0.2"/><polygon points="20.23,25.06 11.46,25.2 18.97,29.74" fill="#fff" opacity="0.16"/></g><circle cx="25.4" cy="28.5" r="9" fill="url(#rg0)" opacity="0.6"/><polygon points="26.4,22.6 31.1,29.6 24.2,34.3 19.6,27.4" fill="#fff" filter="url(#b03)"/><polygon points="26.06,24.61 29.16,29.23 24.61,32.33 21.57,27.77" fill="none" stroke="#c8c8c8" stroke-width="0.55"/></g><text x="5.4" y="9.3" font-size="10.4" fill="#9a9a9a" font-family="Liberation Sans, sans-serif">G</text></svg><span class="t" style="left:597.3px;top:705.6px;font-size:9.05px;color:#1c6fd6;font-weight:normal;transform:translate(-50%,-50%);-webkit-text-stroke:0.25px #1c6fd6;">Scene P</span><svg class="a" style="left:628px;top:695.6px" width="53" height="17" viewBox="-1 0 53 17"><path d="M0 3 Q0 0 3 0 H48 Q51 0 51 3 V16 H0 Z" fill="url(#lblg)"/></svg><svg class="a g" style="left:628px;top:640px" width="53" height="56" viewBox="-1 -1 53 56"><path d="M-0.8 2.3 L2.3 -0.8 H48.7 L51.8 2.3 V55 H-0.8 Z" fill="#fafafa"/><g clip-path="url(#tc)"><rect x="0" y="0" width="51" height="55" fill="#000"/><path d="M14.4 30.7 L17 14 L19 30 Z" fill="#fff" opacity="0.10" filter="url(#b15)"/><path d="M22 46 L44 54 L30 50 Z" fill="#fff" opacity="0.10" filter="url(#b15)"/><circle cx="13.5" cy="41" r="6" fill="#fff" opacity="0.16" filter="url(#b15)"/><path d="M14.4 30.7 L3.4 45.5 L22.2 47 Z" fill="none" stroke="#f4f4f4" stroke-width="1.15" stroke-linejoin="round"/><path d="M13.4 37 L12 43 L16 42.5 Z" fill="#fff" opacity="0.45" filter="url(#b05)"/></g><text x="5.4" y="9.3" font-size="10.4" fill="#9a9a9a" font-family="Liberation Sans, sans-serif">H</text></svg><span class="t" style="left:656.3px;top:705.6px;font-size:9.05px;color:#1c6fd6;font-weight:normal;transform:translate(-50%,-50%);-webkit-text-stroke:0.25px #1c6fd6;">Scene 1</span><svg class="a" style="left:688px;top:695.6px" width="53" height="17" viewBox="-1 0 53 17"><path d="M0 3 Q0 0 3 0 H48 Q51 0 51 3 V16 H0 Z" fill="url(#lblg)"/></svg><svg class="a g" style="left:688px;top:640px" width="53" height="56" viewBox="-1 -1 53 56"><path d="M-0.8 2.3 L2.3 -0.8 H48.7 L51.8 2.3 V55 H-0.8 Z" fill="#fafafa"/><g clip-path="url(#tc)"><rect x="0" y="0" width="51" height="55" fill="#000"/><g stroke-linecap="butt"><path d="M27.15 30.59 L10.3 -1" stroke="#e254d6" stroke-width="2.6" opacity="0.95"/><path d="M27.15 30.59 L10.3 -1" stroke="#f6a8ee" stroke-width="0.91" opacity="0.6"/><path d="M26.87 30.59 L15 -1" stroke="#e254d6" stroke-width="2.2" opacity="0.85"/><path d="M26.87 30.59 L15 -1" stroke="#f6a8ee" stroke-width="0.77" opacity="0.6"/><path d="M26.06 30.59 L28.6 -1" stroke="#e254d6" stroke-width="2.3" opacity="0.9"/><path d="M26.06 30.59 L28.6 -1" stroke="#f6a8ee" stroke-width="0.8" opacity="0.6"/><path d="M24.65 30.28 L52 4.2" stroke="#e254d6" stroke-width="2.8" opacity="0.95"/><path d="M24.65 30.28 L52 4.2" stroke="#f6a8ee" stroke-width="0.98" opacity="0.6"/><path d="M24.65 28.09 L52 40.6" stroke="#e254d6" stroke-width="2.8" opacity="0.95"/><path d="M24.65 28.09 L52 40.6" stroke="#f6a8ee" stroke-width="0.98" opacity="0.6"/><path d="M24.89 27.17 L48 56" stroke="#e254d6" stroke-width="2.4" opacity="0.9"/><path d="M24.89 27.17 L48 56" stroke="#f6a8ee" stroke-width="0.84" opacity="0.6"/><path d="M25.98 27.17 L29.8 56" stroke="#e254d6" stroke-width="2.4" opacity="0.9"/><path d="M25.98 27.17 L29.8 56" stroke="#f6a8ee" stroke-width="0.84" opacity="0.6"/><path d="M26.55 27.17 L20.4 56" stroke="#e254d6" stroke-width="1.8" opacity="0.75"/><path d="M26.55 27.17 L20.4 56" stroke="#f6a8ee" stroke-width="0.63" opacity="0.6"/><path d="M26.92 27.17 L14.2 56" stroke="#e254d6" stroke-width="3" opacity="0.95"/><path d="M26.92 27.17 L14.2 56" stroke="#f6a8ee" stroke-width="1.05" opacity="0.6"/></g><circle cx="46.2" cy="7.8" r="1" fill="#ffe0ff"/><circle cx="21.3" cy="20.3" r="0.8" fill="#ffd0ff"/><circle cx="21.8" cy="48.8" r="1" fill="#ffe0ff"/><circle cx="50.2" cy="40.6" r="1" fill="#ffe0ff"/><circle cx="15" cy="53.8" r="0.9" fill="#ffe0ff"/></g><text x="5.4" y="9.3" font-size="10.4" fill="#9a9a9a" font-family="Liberation Sans, sans-serif">J</text></svg><span class="t" style="left:716.3px;top:705.6px;font-size:9.05px;color:#1c6fd6;font-weight:normal;transform:translate(-50%,-50%);-webkit-text-stroke:0.25px #1c6fd6;">Scene E</span><svg class="a" style="left:747px;top:695.6px" width="53" height="17" viewBox="-1 0 53 17"><path d="M0 3 Q0 0 3 0 H48 Q51 0 51 3 V16 H0 Z" fill="url(#lblg)"/></svg><svg class="a g" style="left:747px;top:640px" width="53" height="56" viewBox="-1 -1 53 56"><path d="M-0.8 2.3 L2.3 -0.8 H48.7 L51.8 2.3 V55 H-0.8 Z" fill="#fafafa"/><g clip-path="url(#tc)"><rect x="0" y="0" width="51" height="55" fill="#000"/><g filter="url(#b05)"><path d="M25.9 27.9 L67.9 27.9 L67.66 32.4 Z" fill="#005f33"/><path d="M25.9 27.9 L67.74 31.56 L67.11 36.02 Z" fill="#006139"/><path d="M25.9 27.9 L67.26 35.19 L66.24 39.58 Z" fill="#006340"/><path d="M25.9 27.9 L66.47 38.77 L65.07 43.05 Z" fill="#006547"/><path d="M25.9 27.9 L65.37 42.26 L63.6 46.41 Z" fill="#00674e"/><path d="M25.9 27.9 L63.96 45.65 L61.85 49.62 Z" fill="#006955"/><path d="M25.9 27.9 L62.27 48.9 L59.82 52.67 Z" fill="#006b5d"/><path d="M25.9 27.9 L60.3 51.99 L57.53 55.54 Z" fill="#006e64"/><path d="M25.9 27.9 L58.07 54.9 L55 58.19 Z" fill="#00706b"/><path d="M25.9 27.9 L55.6 57.6 L52.25 60.61 Z" fill="#007172"/><path d="M25.9 27.9 L52.9 60.07 L49.3 62.78 Z" fill="#006e75"/><path d="M25.9 27.9 L49.99 62.3 L46.17 64.69 Z" fill="#006a77"/><path d="M25.9 27.9 L46.9 64.27 L42.89 66.31 Z" fill="#00677a"/><path d="M25.9 27.9 L43.65 65.96 L39.47 67.65 Z" fill="#00637c"/><path d="M25.9 27.9 L40.26 67.37 L35.96 68.68 Z" fill="#005f7f"/><path d="M25.9 27.9 L36.77 68.47 L32.36 69.4 Z" fill="#005b81"/><path d="M25.9 27.9 L33.19 69.26 L28.72 69.81 Z" fill="#005684"/><path d="M25.9 27.9 L29.56 69.74 L25.06 69.89 Z" fill="#005187"/><path d="M25.9 27.9 L25.9 69.9 L21.4 69.66 Z" fill="#004b8a"/><path d="M25.9 27.9 L22.24 69.74 L17.78 69.11 Z" fill="#00438d"/><path d="M25.9 27.9 L18.61 69.26 L14.22 68.24 Z" fill="#003b90"/><path d="M25.9 27.9 L15.03 68.47 L10.75 67.07 Z" fill="#003392"/><path d="M25.9 27.9 L11.54 67.37 L7.39 65.6 Z" fill="#002a95"/><path d="M25.9 27.9 L8.15 65.96 L4.18 63.85 Z" fill="#002199"/><path d="M25.9 27.9 L4.9 64.27 L1.13 61.82 Z" fill="#00189c"/><path d="M25.9 27.9 L1.81 62.3 L-1.74 59.53 Z" fill="#000e9f"/><path d="M25.9 27.9 L-1.1 60.07 L-4.39 57 Z" fill="#0004a2"/><path d="M25.9 27.9 L-3.8 57.6 L-6.81 54.25 Z" fill="#0900a5"/><path d="M25.9 27.9 L-6.27 54.9 L-8.98 51.3 Z" fill="#1700a9"/><path d="M25.9 27.9 L-8.5 51.99 L-10.89 48.17 Z" fill="#2600ac"/><path d="M25.9 27.9 L-10.47 48.9 L-12.51 44.89 Z" fill="#3600af"/><path d="M25.9 27.9 L-12.16 45.65 L-13.85 41.47 Z" fill="#4600b3"/><path d="M25.9 27.9 L-13.57 42.26 L-14.88 37.96 Z" fill="#7400f2"/><path d="M25.9 27.9 L-14.67 38.77 L-15.6 34.36 Z" fill="#8900f2"/><path d="M25.9 27.9 L-15.46 35.19 L-16.01 30.72 Z" fill="#9d00f2"/><path d="M25.9 27.9 L-15.94 31.56 L-16.09 27.06 Z" fill="#290038"/><path d="M25.9 27.9 L-16.1 27.9 L-15.86 23.4 Z" fill="#382e00"/><path d="M25.9 27.9 L-15.94 24.24 L-15.31 19.78 Z" fill="#393000"/><path d="M25.9 27.9 L-15.46 20.61 L-14.44 16.22 Z" fill="#393100"/><path d="M25.9 27.9 L-14.67 17.03 L-13.27 12.75 Z" fill="#393300"/><path d="M25.9 27.9 L-13.57 13.54 L-11.8 9.39 Z" fill="#3a3500"/><path d="M25.9 27.9 L-12.16 10.15 L-10.05 6.18 Z" fill="#3a3700"/><path d="M25.9 27.9 L-10.47 6.9 L-8.02 3.13 Z" fill="#3a3900"/><path d="M25.9 27.9 L-8.5 3.81 L-5.73 0.26 Z" fill="#3b3b00"/><path d="M25.9 27.9 L-6.27 0.9 L-3.2 -2.39 Z" fill="#3a3b00"/><path d="M25.9 27.9 L-3.8 -1.8 L-0.45 -4.81 Z" fill="#373c00"/><path d="M25.9 27.9 L-1.1 -4.27 L2.5 -6.98 Z" fill="#333d00"/><path d="M25.9 27.9 L1.81 -6.5 L5.63 -8.89 Z" fill="#2f3d00"/><path d="M25.9 27.9 L4.9 -8.47 L8.91 -10.51 Z" fill="#2c3e00"/><path d="M25.9 27.9 L8.15 -10.16 L12.33 -11.85 Z" fill="#273f00"/><path d="M25.9 27.9 L11.54 -11.57 L15.84 -12.88 Z" fill="#234000"/><path d="M25.9 27.9 L15.03 -12.67 L19.44 -13.6 Z" fill="#1f4100"/><path d="M25.9 27.9 L18.61 -13.46 L23.08 -14.01 Z" fill="#1b4200"/><path d="M25.9 27.9 L22.24 -13.94 L26.74 -14.09 Z" fill="#164300"/><path d="M25.9 27.9 L25.9 -14.1 L30.4 -13.86 Z" fill="#124400"/><path d="M25.9 27.9 L29.56 -13.94 L34.02 -13.31 Z" fill="#0d4500"/><path d="M25.9 27.9 L33.19 -13.46 L37.58 -12.44 Z" fill="#084600"/><path d="M25.9 27.9 L36.77 -12.67 L41.05 -11.27 Z" fill="#044700"/><path d="M25.9 27.9 L40.26 -11.57 L44.41 -9.8 Z" fill="#014800"/><path d="M25.9 27.9 L43.65 -10.16 L47.62 -8.05 Z" fill="#004a01"/><path d="M25.9 27.9 L46.9 -8.47 L50.67 -6.02 Z" fill="#004b04"/><path d="M25.9 27.9 L49.99 -6.5 L53.54 -3.73 Z" fill="#004c07"/><path d="M25.9 27.9 L52.9 -4.27 L56.19 -1.2 Z" fill="#004e0a"/><path d="M25.9 27.9 L55.6 -1.8 L58.61 1.55 Z" fill="#004f0e"/><path d="M25.9 27.9 L58.07 0.9 L60.78 4.5 Z" fill="#005111"/><path d="M25.9 27.9 L60.3 3.81 L62.69 7.63 Z" fill="#005215"/><path d="M25.9 27.9 L62.27 6.9 L64.31 10.91 Z" fill="#005418"/><path d="M25.9 27.9 L63.96 10.15 L65.65 14.33 Z" fill="#00561c"/><path d="M25.9 27.9 L65.37 13.54 L66.68 17.84 Z" fill="#005720"/><path d="M25.9 27.9 L66.47 17.03 L67.4 21.44 Z" fill="#005924"/><path d="M25.9 27.9 L67.26 20.61 L67.81 25.08 Z" fill="#005b29"/><path d="M25.9 27.9 L67.74 24.24 L67.89 28.74 Z" fill="#005d2d"/></g><defs><radialGradient id="u12" gradientUnits="userSpaceOnUse" cx="25.9" cy="27.9" r="36"><stop offset="0" stop-color="#fff" stop-opacity="0.0"/><stop offset="0.1" stop-color="#aaa" stop-opacity="0.0"/><stop offset="0.3" stop-color="#444" stop-opacity="0.0"/><stop offset="0.5" stop-color="#000" stop-opacity="0.18"/><stop offset="1" stop-color="#000" stop-opacity="0.62"/></radialGradient></defs><rect x="0" y="0" width="51" height="55" fill="url(#u12)"/><defs><radialGradient id="u12w" gradientUnits="userSpaceOnUse" cx="25.9" cy="27.9" r="11"><stop offset="0" stop-color="#fff" stop-opacity="1"/><stop offset="0.35" stop-color="#fff" stop-opacity="0.7"/><stop offset="1" stop-color="#fff" stop-opacity="0"/></radialGradient><mask id="u12m"><rect x="0" y="0" width="51" height="55" fill="url(#u12w)"/></mask></defs><g mask="url(#u12m)" filter="url(#b05)"><path d="M25.9 27.9 L37.9 27.9 L37.67 30.22 Z" fill="#00ff8f"/><path d="M25.9 27.9 L37.72 29.98 L37.09 32.23 Z" fill="#00ffac"/><path d="M25.9 27.9 L37.18 32 L36.17 34.11 Z" fill="#00ffc8"/><path d="M25.9 27.9 L36.29 33.9 L34.94 35.8 Z" fill="#00ffe2"/><path d="M25.9 27.9 L35.09 35.61 L33.43 37.24 Z" fill="#00fffb"/><path d="M25.9 27.9 L33.61 37.09 L31.69 38.41 Z" fill="#00eaff"/><path d="M25.9 27.9 L31.9 38.29 L29.78 39.26 Z" fill="#00d1ff"/><path d="M25.9 27.9 L30 39.18 L27.75 39.76 Z" fill="#00b9ff"/><path d="M25.9 27.9 L27.98 39.72 L25.66 39.9 Z" fill="#00a0ff"/><path d="M25.9 27.9 L25.9 39.9 L23.58 39.67 Z" fill="#0082ff"/><path d="M25.9 27.9 L23.82 39.72 L21.57 39.09 Z" fill="#0061ff"/><path d="M25.9 27.9 L21.8 39.18 L19.69 38.17 Z" fill="#0040ff"/><path d="M25.9 27.9 L19.9 38.29 L18 36.94 Z" fill="#001fff"/><path d="M25.9 27.9 L18.19 37.09 L16.56 35.43 Z" fill="#0200ff"/><path d="M25.9 27.9 L16.71 35.61 L15.39 33.69 Z" fill="#2e00ff"/><path d="M25.9 27.9 L15.51 33.9 L14.54 31.78 Z" fill="#5900ff"/><path d="M25.9 27.9 L14.62 32 L14.04 29.75 Z" fill="#8500ff"/><path d="M25.9 27.9 L14.08 29.98 L13.9 27.66 Z" fill="#b000ff"/><path d="M25.9 27.9 L13.9 27.9 L14.13 25.58 Z" fill="#ffd300"/><path d="M25.9 27.9 L14.08 25.82 L14.71 23.57 Z" fill="#ffe100"/><path d="M25.9 27.9 L14.62 23.8 L15.63 21.69 Z" fill="#ffee00"/><path d="M25.9 27.9 L15.51 21.9 L16.86 20 Z" fill="#fffb00"/><path d="M25.9 27.9 L16.71 20.19 L18.37 18.56 Z" fill="#f4ff00"/><path d="M25.9 27.9 L18.19 18.71 L20.11 17.39 Z" fill="#cfff00"/><path d="M25.9 27.9 L19.9 17.51 L22.02 16.54 Z" fill="#a9ff00"/><path d="M25.9 27.9 L21.8 16.62 L24.05 16.04 Z" fill="#84ff00"/><path d="M25.9 27.9 L23.82 16.08 L26.14 15.9 Z" fill="#5eff00"/><path d="M25.9 27.9 L25.9 15.9 L28.22 16.13 Z" fill="#39ff00"/><path d="M25.9 27.9 L27.98 16.08 L30.23 16.71 Z" fill="#14ff00"/><path d="M25.9 27.9 L30 16.62 L32.11 17.63 Z" fill="#00ff00"/><path d="M25.9 27.9 L31.9 17.51 L33.8 18.86 Z" fill="#00ff14"/><path d="M25.9 27.9 L33.61 18.71 L35.24 20.37 Z" fill="#00ff27"/><path d="M25.9 27.9 L35.09 20.19 L36.41 22.11 Z" fill="#00ff3b"/><path d="M25.9 27.9 L36.29 21.9 L37.26 24.02 Z" fill="#00ff4f"/><path d="M25.9 27.9 L37.18 23.8 L37.76 26.05 Z" fill="#00ff63"/><path d="M25.9 27.9 L37.72 25.82 L37.9 28.14 Z" fill="#00ff77"/></g><path d="M25.9 27.9 L0 33.5 L0 39 Z" fill="#c080c0" opacity="0.35"/><g fill="none" stroke-linecap="round"><path d="M23.6 26.7 L23.85 26.52" stroke="#ff1414" stroke-width="1.05"/><path d="M23.85 26.52 L24.18 26.25" stroke="#ff1614" stroke-width="1.05"/><path d="M24.18 26.25 L24.6 25.97" stroke="#ff1714" stroke-width="1.05"/><path d="M24.6 25.97 L25.11 25.76" stroke="#ff1914" stroke-width="1.05"/><path d="M25.11 25.76 L25.7 25.7" stroke="#ff1b14" stroke-width="1.05"/><path d="M25.7 25.7 L26.44 25.81" stroke="#ff1c14" stroke-width="1.05"/><path d="M26.44 25.81 L27.33 26.02" stroke="#ff1e14" stroke-width="1.05"/><path d="M27.33 26.02 L28.28 26.34" stroke="#ff1f14" stroke-width="1.05"/><path d="M28.28 26.34 L29.2 26.73" stroke="#ff2114" stroke-width="1.05"/><path d="M29.2 26.73 L30 27.2" stroke="#ff2214" stroke-width="1.05"/><path d="M30 27.2 L30.71 27.75" stroke="#ff2414" stroke-width="1.05"/><path d="M30.71 27.75 L31.38 28.39" stroke="#ff2814" stroke-width="1.05"/><path d="M31.38 28.39 L31.98 29.1" stroke="#ff2c14" stroke-width="1.05"/><path d="M31.98 29.1 L32.47 29.88" stroke="#ff3014" stroke-width="1.05"/><path d="M32.47 29.88 L32.8 30.7" stroke="#ff3514" stroke-width="1.05"/><path d="M32.8 30.7 L32.96 31.6" stroke="#ff3914" stroke-width="1.05"/><path d="M32.96 31.6 L32.97 32.59" stroke="#ff3d14" stroke-width="1.05"/><path d="M32.97 32.59 L32.86 33.62" stroke="#ff4214" stroke-width="1.05"/><path d="M32.86 33.62 L32.66 34.64" stroke="#ff4614" stroke-width="1.05"/><path d="M32.66 34.64 L32.4 35.6" stroke="#ff4a14" stroke-width="1.05"/><path d="M32.4 35.6 L32.08 36.55" stroke="#ff4f14" stroke-width="1.05"/><path d="M32.08 36.55 L31.68 37.52" stroke="#ff5314" stroke-width="1.05"/><path d="M31.68 37.52 L31.19 38.44" stroke="#ff5714" stroke-width="1.05"/><path d="M31.19 38.44 L30.63 39.25" stroke="#ff5b14" stroke-width="1.05"/><path d="M30.63 39.25 L30 39.9" stroke="#ff6014" stroke-width="1.05"/><path d="M30 39.9 L29.27 40.38" stroke="#ff6414" stroke-width="1.05"/><path d="M29.27 40.38 L28.45 40.74" stroke="#ff6714" stroke-width="1.05"/><path d="M28.45 40.74 L27.55 40.97" stroke="#ff6b14" stroke-width="1.05"/><path d="M27.55 40.97 L26.63 41.06" stroke="#ff6e14" stroke-width="1.05"/><path d="M26.63 41.06 L25.7 41" stroke="#ff7214" stroke-width="1.05"/><path d="M25.7 41 L24.76 40.73" stroke="#ff7514" stroke-width="1.05"/><path d="M24.76 40.73 L23.79 40.24" stroke="#ff7814" stroke-width="1.05"/><path d="M23.79 40.24 L22.8 39.65" stroke="#ff7c14" stroke-width="1.05"/><path d="M22.8 39.65 L21.8 39.04" stroke="#ff7f14" stroke-width="1.05"/><path d="M21.8 39.04 L20.8 38.5" stroke="#ff8314" stroke-width="1.05"/><path d="M20.8 38.5 L19.78 38.06" stroke="#ff8614" stroke-width="1.05"/><path d="M19.78 38.06 L18.74 37.66" stroke="#ff8a14" stroke-width="1.05"/><path d="M18.74 37.66 L17.7 37.26" stroke="#ff8d14" stroke-width="1.05"/><path d="M17.7 37.26 L16.71 36.82" stroke="#ff9014" stroke-width="1.05"/><path d="M16.71 36.82 L15.8 36.3" stroke="#ff9414" stroke-width="1.05"/><path d="M15.8 36.3 L14.97 35.72" stroke="#ff9714" stroke-width="1.05"/><path d="M14.97 35.72 L14.18 35.09" stroke="#ff9b14" stroke-width="1.05"/><path d="M14.18 35.09 L13.46 34.41" stroke="#ffa014" stroke-width="1.05"/><path d="M13.46 34.41 L12.82 33.66" stroke="#ffa514" stroke-width="1.05"/><path d="M12.82 33.66 L12.3 32.8" stroke="#ffaa14" stroke-width="1.05"/><path d="M12.3 32.8 L11.88 31.84" stroke="#ffaf14" stroke-width="1.05"/><path d="M11.88 31.84 L11.55 30.78" stroke="#ffb414" stroke-width="1.05"/><path d="M11.55 30.78 L11.32 29.65" stroke="#ffb914" stroke-width="1.05"/><path d="M11.32 29.65 L11.2 28.45" stroke="#ffbe14" stroke-width="1.05"/><path d="M11.2 28.45 L11.2 27.2" stroke="#ffc314" stroke-width="1.05"/><path d="M11.2 27.2 L11.36 25.85" stroke="#ffc814" stroke-width="1.05"/><path d="M11.36 25.85 L11.66 24.4" stroke="#ffcd14" stroke-width="1.05"/><path d="M11.66 24.4 L12.07 22.91" stroke="#ffd214" stroke-width="1.05"/><path d="M12.07 22.91 L12.53 21.45" stroke="#ffd714" stroke-width="1.05"/><path d="M12.53 21.45 L13 20.1" stroke="#ffdc14" stroke-width="1.05"/><path d="M13 20.1 L13.47 18.84" stroke="#ffe114" stroke-width="1.05"/><path d="M13.47 18.84 L13.98 17.61" stroke="#ffe614" stroke-width="1.05"/><path d="M13.98 17.61 L14.52 16.45" stroke="#ffeb14" stroke-width="1.05"/><path d="M14.52 16.45 L15.13 15.38" stroke="#fff014" stroke-width="1.05"/><path d="M15.13 15.38 L15.8 14.4" stroke="#fff514" stroke-width="1.05"/><path d="M15.8 14.4 L16.58 13.48" stroke="#fffd14" stroke-width="1.05"/><path d="M16.58 13.48 L17.45 12.61" stroke="#f7ff14" stroke-width="1.05"/><path d="M17.45 12.61 L18.37 11.84" stroke="#ecff14" stroke-width="1.05"/><path d="M18.37 11.84 L19.27 11.25" stroke="#e2ff14" stroke-width="1.05"/><path d="M19.27 11.25 L20.1 10.9" stroke="#d7ff14" stroke-width="1.05"/><path d="M20.1 10.9 L20.84 10.84" stroke="#cdff14" stroke-width="1.05"/><path d="M20.84 10.84 L21.52 11.04" stroke="#c3ff14" stroke-width="1.05"/><path d="M21.52 11.04 L22.18 11.4" stroke="#b8ff14" stroke-width="1.05"/><path d="M22.18 11.4 L22.86 11.85" stroke="#aeff14" stroke-width="1.05"/><path d="M22.86 11.85 L23.6 12.3" stroke="#a3ff14" stroke-width="1.05"/><path d="M23.6 12.3 L24.42 12.84" stroke="#99ff14" stroke-width="1.05"/><path d="M24.42 12.84 L25.3 13.52" stroke="#90ff14" stroke-width="1.05"/><path d="M25.3 13.52 L26.2 14.22" stroke="#86ff14" stroke-width="1.05"/><path d="M26.2 14.22 L27.08 14.79" stroke="#7dff14" stroke-width="1.05"/><path d="M27.08 14.79 L27.9 15.1" stroke="#73ff14" stroke-width="1.05"/><path d="M27.9 15.1 L28.63 15.09" stroke="#69ff14" stroke-width="1.05"/><path d="M28.63 15.09 L29.29 14.84" stroke="#60ff14" stroke-width="1.05"/><path d="M29.29 14.84 L29.93 14.46" stroke="#56ff14" stroke-width="1.05"/><path d="M29.93 14.46 L30.62 14.05" stroke="#4cff14" stroke-width="1.05"/><path d="M30.62 14.05 L31.4 13.7" stroke="#43ff14" stroke-width="1.05"/><path d="M31.4 13.7 L32.31 13.36" stroke="#3bff14" stroke-width="1.05"/><path d="M32.31 13.36 L33.3 12.97" stroke="#37ff14" stroke-width="1.05"/><path d="M33.3 12.97 L34.34 12.61" stroke="#33ff14" stroke-width="1.05"/><path d="M34.34 12.61 L35.38 12.36" stroke="#30ff14" stroke-width="1.05"/><path d="M35.38 12.36 L36.4 12.3" stroke="#2cff14" stroke-width="1.05"/><path d="M36.4 12.3 L37.41 12.44" stroke="#28ff14" stroke-width="1.05"/><path d="M37.41 12.44 L38.43 12.72" stroke="#25ff14" stroke-width="1.05"/><path d="M38.43 12.72 L39.45 13.13" stroke="#21ff14" stroke-width="1.05"/><path d="M39.45 13.13 L40.41 13.69" stroke="#1dff14" stroke-width="1.05"/><path d="M40.41 13.69 L41.3 14.4" stroke="#19ff14" stroke-width="1.05"/><path d="M41.3 14.4 L42.13 15.26" stroke="#16ff14" stroke-width="1.05"/><path d="M42.13 15.26 L42.94 16.29" stroke="#14ff17" stroke-width="1.05"/><path d="M42.94 16.29 L43.67 17.45" stroke="#14ff1a" stroke-width="1.05"/><path d="M43.67 17.45 L44.3 18.72" stroke="#14ff1e" stroke-width="1.05"/><path d="M44.3 18.72 L44.8 20.1" stroke="#14ff22" stroke-width="1.05"/><path d="M44.8 20.1 L45.18 21.62" stroke="#14ff25" stroke-width="1.05"/><path d="M45.18 21.62 L45.45 23.3" stroke="#14ff2d" stroke-width="1.05"/><path d="M45.45 23.3 L45.61 25.07" stroke="#14ff3c" stroke-width="1.05"/><path d="M45.61 25.07 L45.63 26.86" stroke="#14ff4c" stroke-width="1.05"/><path d="M45.63 26.86 L45.5 28.6" stroke="#14ff5c" stroke-width="1.05"/><path d="M45.5 28.6 L45.2 30.3" stroke="#14ff6c" stroke-width="1.05"/><path d="M45.2 30.3 L44.73 32" stroke="#14ff7b" stroke-width="1.05"/><path d="M44.73 32 L44.14 33.71" stroke="#14ff8b" stroke-width="1.05"/><path d="M44.14 33.71 L43.45 35.41" stroke="#14ff9b" stroke-width="1.05"/><path d="M43.45 35.41 L42.7 37.1" stroke="#14ffab" stroke-width="1.05"/><path d="M42.7 37.1 L41.87 38.81" stroke="#14ffb8" stroke-width="1.05"/><path d="M41.87 38.81 L40.93 40.53" stroke="#14ffc3" stroke-width="1.05"/><path d="M40.93 40.53 L39.92 42.24" stroke="#14ffcf" stroke-width="1.05"/><path d="M39.92 42.24 L38.86 43.9" stroke="#14ffda" stroke-width="1.05"/><path d="M38.86 43.9 L37.8 45.5" stroke="#14ffe6" stroke-width="1.05"/><path d="M37.8 45.5 L36.69 47.11" stroke="#14fff2" stroke-width="1.05"/><path d="M36.69 47.11 L35.51 48.74" stroke="#14fffd" stroke-width="1.05"/><path d="M35.51 48.74 L34.31 50.28" stroke="#14f5ff" stroke-width="1.05"/><path d="M34.31 50.28 L33.16 51.61" stroke="#14eaff" stroke-width="1.05"/><path d="M33.16 51.61 L32.1 52.6" stroke="#14deff" stroke-width="1.05"/><path d="M32.1 52.6 L31.21 53.25" stroke="#14d2ff" stroke-width="1.05"/><path d="M31.21 53.25 L30.45 53.64" stroke="#14c4ff" stroke-width="1.05"/><path d="M30.45 53.64 L29.72 53.78" stroke="#14b7ff" stroke-width="1.05"/><path d="M29.72 53.78 L28.9 53.67" stroke="#14a9ff" stroke-width="1.05"/><path d="M28.9 53.67 L27.9 53.3" stroke="#149cff" stroke-width="1.05"/><path d="M27.9 53.3 L26.64 52.46" stroke="#148eff" stroke-width="1.05"/><path d="M26.64 52.46 L25.2 51.14" stroke="#1481ff" stroke-width="1.05"/><path d="M25.2 51.14 L23.68 49.69" stroke="#1473ff" stroke-width="1.05"/><path d="M23.68 49.69 L22.18 48.43" stroke="#1466ff" stroke-width="1.05"/><path d="M22.18 48.43 L20.8 47.7" stroke="#1458ff" stroke-width="1.05"/><path d="M20.8 47.7 L19.57 47.68" stroke="#144cff" stroke-width="1.05"/><path d="M19.57 47.68 L18.41 48.15" stroke="#1443ff" stroke-width="1.05"/><path d="M18.41 48.15 L17.31 48.84" stroke="#1439ff" stroke-width="1.05"/><path d="M17.31 48.84 L16.21 49.48" stroke="#142fff" stroke-width="1.05"/><path d="M16.21 49.48 L15.1 49.8" stroke="#1426ff" stroke-width="1.05"/><path d="M15.1 49.8 L13.96 49.81" stroke="#141cff" stroke-width="1.05"/><path d="M13.96 49.81 L12.82 49.7" stroke="#1614ff" stroke-width="1.05"/><path d="M12.82 49.7 L11.69 49.44" stroke="#2014ff" stroke-width="1.05"/><path d="M11.69 49.44 L10.58 49.01" stroke="#2a14ff" stroke-width="1.05"/><path d="M10.58 49.01 L9.5 48.4" stroke="#3314ff" stroke-width="1.05"/><path d="M9.5 48.4 L8.44 47.58" stroke="#3d14ff" stroke-width="1.05"/><path d="M8.44 47.58 L7.4 46.56" stroke="#4514ff" stroke-width="1.05"/><path d="M7.4 46.56 L6.38 45.39" stroke="#4e14ff" stroke-width="1.05"/><path d="M6.38 45.39 L5.41 44.09" stroke="#5614ff" stroke-width="1.05"/><path d="M5.41 44.09 L4.5 42.7" stroke="#5f14ff" stroke-width="1.05"/><path d="M4.5 42.7 L3.6 41.04" stroke="#6714ff" stroke-width="1.05"/><path d="M3.6 41.04 L2.71 39.09" stroke="#7014ff" stroke-width="1.05"/><path d="M2.71 39.09 L1.89 37.12" stroke="#7814ff" stroke-width="1.05"/><path d="M1.89 37.12 L1.2 35.4" stroke="#8114ff" stroke-width="1.05"/><path d="M1.2 35.4 L0.7 34.2" stroke="#8914ff" stroke-width="1.05"/></g><rect x="0" y="0" width="3" height="3" fill="#000"/><rect x="48" y="0" width="3" height="3.4" fill="#000"/><rect x="0" y="52.8" width="3.4" height="2.2" fill="#000"/><rect x="47.8" y="52.8" width="3.2" height="2.2" fill="#000"/></g><text x="5.4" y="9.3" font-size="10.4" fill="#9a9a9a" font-family="Liberation Sans, sans-serif">K</text></svg><span class="t" style="left:775.3px;top:705.6px;font-size:9.05px;color:#1c6fd6;font-weight:normal;transform:translate(-50%,-50%);-webkit-text-stroke:0.25px #1c6fd6;">Scene 8</span><svg class="a" style="left:807px;top:695.6px" width="53" height="17" viewBox="-1 0 53 17"><path d="M0 3 Q0 0 3 0 H48 Q51 0 51 3 V16 H0 Z" fill="url(#lblg)"/></svg><svg class="a g" style="left:807px;top:640px" width="53" height="56" viewBox="-1 -1 53 56"><path d="M-0.8 2.3 L2.3 -0.8 H48.7 L51.8 2.3 V55 H-0.8 Z" fill="#fafafa"/><g clip-path="url(#tc)"><rect x="0" y="0" width="51" height="55" fill="#000"/><g filter="url(#b05)"><path d="M25.6 27.9 L67.6 27.9 L67.36 32.4 Z" fill="#4e0053"/><path d="M25.6 27.9 L67.44 31.56 L66.81 36.02 Z" fill="#4e0055"/><path d="M25.6 27.9 L66.96 35.19 L65.94 39.58 Z" fill="#4d0057"/><path d="M25.6 27.9 L66.17 38.77 L64.77 43.05 Z" fill="#4c0059"/><path d="M25.6 27.9 L65.07 42.26 L63.3 46.41 Z" fill="#4b005a"/><path d="M25.6 27.9 L63.66 45.65 L61.55 49.62 Z" fill="#4a005c"/><path d="M25.6 27.9 L61.97 48.9 L59.52 52.67 Z" fill="#49005e"/><path d="M25.6 27.9 L60 51.99 L57.23 55.54 Z" fill="#470060"/><path d="M25.6 27.9 L57.77 54.9 L54.7 58.19 Z" fill="#460062"/><path d="M25.6 27.9 L55.3 57.6 L51.95 60.61 Z" fill="#440064"/><path d="M25.6 27.9 L52.6 60.07 L49 62.78 Z" fill="#420066"/><path d="M25.6 27.9 L49.69 62.3 L45.87 64.69 Z" fill="#400068"/><path d="M25.6 27.9 L46.6 64.27 L42.59 66.31 Z" fill="#3e006a"/><path d="M25.6 27.9 L43.35 65.96 L39.17 67.65 Z" fill="#3c006c"/><path d="M25.6 27.9 L39.96 67.37 L35.66 68.68 Z" fill="#3a006e"/><path d="M25.6 27.9 L36.47 68.47 L32.06 69.4 Z" fill="#380071"/><path d="M25.6 27.9 L32.89 69.26 L28.42 69.81 Z" fill="#360073"/><path d="M25.6 27.9 L29.26 69.74 L24.76 69.89 Z" fill="#340075"/><path d="M25.6 27.9 L25.6 69.9 L21.1 69.66 Z" fill="#320078"/><path d="M25.6 27.9 L21.94 69.74 L17.48 69.11 Z" fill="#30007a"/><path d="M25.6 27.9 L18.31 69.26 L13.92 68.24 Z" fill="#2e007c"/><path d="M25.6 27.9 L14.73 68.47 L10.45 67.07 Z" fill="#2d007f"/><path d="M25.6 27.9 L11.24 67.37 L7.09 65.6 Z" fill="#2c0081"/><path d="M25.6 27.9 L7.85 65.96 L3.88 63.85 Z" fill="#2b0084"/><path d="M25.6 27.9 L4.6 64.27 L0.83 61.82 Z" fill="#2b0087"/><path d="M25.6 27.9 L1.51 62.3 L-2.04 59.53 Z" fill="#2a0089"/><path d="M25.6 27.9 L-1.4 60.07 L-4.69 57 Z" fill="#2a008c"/><path d="M25.6 27.9 L-4.1 57.6 L-7.11 54.25 Z" fill="#2b008f"/><path d="M25.6 27.9 L-6.57 54.9 L-9.28 51.3 Z" fill="#2c0091"/><path d="M25.6 27.9 L-8.8 51.99 L-11.19 48.17 Z" fill="#2d0094"/><path d="M25.6 27.9 L-10.77 48.9 L-12.81 44.89 Z" fill="#2f0097"/><path d="M25.6 27.9 L-12.46 45.65 L-14.15 41.47 Z" fill="#31009a"/><path d="M25.6 27.9 L-13.87 42.26 L-15.18 37.96 Z" fill="#4300cc"/><path d="M25.6 27.9 L-14.97 38.77 L-15.9 34.36 Z" fill="#4600cc"/><path d="M25.6 27.9 L-15.76 35.19 L-16.31 30.72 Z" fill="#4900cc"/><path d="M25.6 27.9 L-16.24 31.56 L-16.39 27.06 Z" fill="#130033"/><path d="M25.6 27.9 L-16.4 27.9 L-16.16 23.4 Z" fill="#140033"/><path d="M25.6 27.9 L-16.24 24.24 L-15.61 19.78 Z" fill="#160033"/><path d="M25.6 27.9 L-15.76 20.61 L-14.74 16.22 Z" fill="#170034"/><path d="M25.6 27.9 L-14.97 17.03 L-13.57 12.75 Z" fill="#190034"/><path d="M25.6 27.9 L-13.87 13.54 L-12.1 9.39 Z" fill="#1a0034"/><path d="M25.6 27.9 L-12.46 10.15 L-10.35 6.18 Z" fill="#1c0035"/><path d="M25.6 27.9 L-10.77 6.9 L-8.32 3.13 Z" fill="#1e0035"/><path d="M25.6 27.9 L-8.8 3.81 L-6.03 0.26 Z" fill="#200035"/><path d="M25.6 27.9 L-6.57 0.9 L-3.5 -2.39 Z" fill="#210036"/><path d="M25.6 27.9 L-4.1 -1.8 L-0.75 -4.81 Z" fill="#240036"/><path d="M25.6 27.9 L-1.4 -4.27 L2.2 -6.98 Z" fill="#260037"/><path d="M25.6 27.9 L1.51 -6.5 L5.33 -8.89 Z" fill="#280037"/><path d="M25.6 27.9 L4.6 -8.47 L8.61 -10.51 Z" fill="#2a0038"/><path d="M25.6 27.9 L7.85 -10.16 L12.03 -11.85 Z" fill="#2c0039"/><path d="M25.6 27.9 L11.24 -11.57 L15.54 -12.88 Z" fill="#2f0039"/><path d="M25.6 27.9 L14.73 -12.67 L19.14 -13.6 Z" fill="#31003a"/><path d="M25.6 27.9 L18.31 -13.46 L22.78 -14.01 Z" fill="#33003b"/><path d="M25.6 27.9 L21.94 -13.94 L26.44 -14.09 Z" fill="#35003c"/><path d="M25.6 27.9 L25.6 -14.1 L30.1 -13.86 Z" fill="#38003d"/><path d="M25.6 27.9 L29.26 -13.94 L33.72 -13.31 Z" fill="#3a003e"/><path d="M25.6 27.9 L32.89 -13.46 L37.28 -12.44 Z" fill="#3c003f"/><path d="M25.6 27.9 L36.47 -12.67 L40.75 -11.27 Z" fill="#3e0040"/><path d="M25.6 27.9 L39.96 -11.57 L44.11 -9.8 Z" fill="#400041"/><path d="M25.6 27.9 L43.35 -10.16 L47.32 -8.05 Z" fill="#420041"/><path d="M25.6 27.9 L46.6 -8.47 L50.37 -6.02 Z" fill="#430042"/><path d="M25.6 27.9 L49.69 -6.5 L53.24 -3.73 Z" fill="#440042"/><path d="M25.6 27.9 L52.6 -4.27 L55.89 -1.2 Z" fill="#450043"/><path d="M25.6 27.9 L55.3 -1.8 L58.31 1.55 Z" fill="#460044"/><path d="M25.6 27.9 L57.77 0.9 L60.48 4.5 Z" fill="#480045"/><path d="M25.6 27.9 L60 3.81 L62.39 7.63 Z" fill="#490047"/><path d="M25.6 27.9 L61.97 6.9 L64.01 10.91 Z" fill="#4a0049"/><path d="M25.6 27.9 L63.66 10.15 L65.35 14.33 Z" fill="#4c004b"/><path d="M25.6 27.9 L65.07 13.54 L66.38 17.84 Z" fill="#4d004d"/><path d="M25.6 27.9 L66.17 17.03 L67.1 21.44 Z" fill="#4e004f"/><path d="M25.6 27.9 L66.96 20.61 L67.51 25.08 Z" fill="#4e0050"/><path d="M25.6 27.9 L67.44 24.24 L67.59 28.74 Z" fill="#4e0052"/></g><defs><radialGradient id="u13" gradientUnits="userSpaceOnUse" cx="25.6" cy="27.9" r="36"><stop offset="0" stop-color="#f8f" stop-opacity="0.5"/><stop offset="0.15" stop-color="#a4a" stop-opacity="0.12"/><stop offset="0.35" stop-color="#000" stop-opacity="0.05"/><stop offset="1" stop-color="#000" stop-opacity="0.7"/></radialGradient></defs><rect x="0" y="0" width="51" height="55" fill="url(#u13)"/><path d="M25.6 27.9 L0 33.5 L0 39 Z" fill="#c090d0" opacity="0.3"/><g fill="none" stroke-linecap="round"><path d="M25.6 27.9 L25.43 28.07" stroke="#5f19ff" stroke-width="0.95"/><path d="M25.43 28.07 L25.23 28.21" stroke="#5a19ff" stroke-width="0.95"/><path d="M25.23 28.21 L24.99 28.29" stroke="#5619ff" stroke-width="0.95"/><path d="M24.99 28.29 L24.73 28.32" stroke="#5419ff" stroke-width="0.95"/><path d="M24.73 28.32 L24.46 28.29" stroke="#5319ff" stroke-width="0.95"/><path d="M24.46 28.29 L24.18 28.2" stroke="#5319ff" stroke-width="0.95"/><path d="M24.18 28.2 L23.92 28.05" stroke="#5519ff" stroke-width="0.95"/><path d="M23.92 28.05 L23.67 27.84" stroke="#5819ff" stroke-width="0.95"/><path d="M23.67 27.84 L23.45 27.57" stroke="#5c19ff" stroke-width="0.95"/><path d="M23.45 27.57 L23.27 27.25" stroke="#6119ff" stroke-width="0.95"/><path d="M23.27 27.25 L23.14 26.88" stroke="#6719ff" stroke-width="0.95"/><path d="M23.14 26.88 L23.07 26.48" stroke="#6f19ff" stroke-width="0.95"/><path d="M23.07 26.48 L23.07 26.04" stroke="#7719ff" stroke-width="0.95"/><path d="M23.07 26.04 L23.13 25.59" stroke="#8019ff" stroke-width="0.95"/><path d="M23.13 25.59 L23.27 25.13" stroke="#8a19ff" stroke-width="0.95"/><path d="M23.27 25.13 L23.48 24.66" stroke="#9419ff" stroke-width="0.95"/><path d="M23.48 24.66 L23.78 24.22" stroke="#9f19ff" stroke-width="0.95"/><path d="M23.78 24.22 L24.15 23.8" stroke="#aa19ff" stroke-width="0.95"/><path d="M24.15 23.8 L24.6 23.42" stroke="#b519ff" stroke-width="0.95"/><path d="M24.6 23.42 L25.12 23.09" stroke="#c019ff" stroke-width="0.95"/><path d="M25.12 23.09 L25.7 22.83" stroke="#cb19ff" stroke-width="0.95"/><path d="M25.7 22.83 L26.34 22.64" stroke="#d519ff" stroke-width="0.95"/><path d="M26.34 22.64 L27.03 22.53" stroke="#df19ff" stroke-width="0.95"/><path d="M27.03 22.53 L27.75 22.51" stroke="#e819ff" stroke-width="0.95"/><path d="M27.75 22.51 L28.49 22.6" stroke="#f019ff" stroke-width="0.95"/><path d="M28.49 22.6 L29.24 22.78" stroke="#f719ff" stroke-width="0.95"/><path d="M29.24 22.78 L29.99 23.08" stroke="#fd19ff" stroke-width="0.95"/><path d="M29.99 23.08 L30.72 23.48" stroke="#ff19fc" stroke-width="0.95"/><path d="M30.72 23.48 L31.41 23.99" stroke="#ff19f8" stroke-width="0.95"/><path d="M31.41 23.99 L32.05 24.6" stroke="#ff19f5" stroke-width="0.95"/><path d="M32.05 24.6 L32.63 25.31" stroke="#ff19f4" stroke-width="0.95"/><path d="M32.63 25.31 L33.12 26.11" stroke="#ff19f4" stroke-width="0.95"/><path d="M33.12 26.11 L33.52 27" stroke="#ff19f5" stroke-width="0.95"/><path d="M33.52 27 L33.81 27.95" stroke="#ff19f8" stroke-width="0.95"/><path d="M33.81 27.95 L33.99 28.96" stroke="#ff19fb" stroke-width="0.95"/><path d="M33.99 28.96 L34.04 30.02" stroke="#fe19ff" stroke-width="0.95"/><path d="M34.04 30.02 L33.95 31.1" stroke="#f719ff" stroke-width="0.95"/><path d="M33.95 31.1 L33.72 32.18" stroke="#f019ff" stroke-width="0.95"/><path d="M33.72 32.18 L33.35 33.26" stroke="#e819ff" stroke-width="0.95"/><path d="M33.35 33.26 L32.83 34.31" stroke="#df19ff" stroke-width="0.95"/><path d="M32.83 34.31 L32.18 35.31" stroke="#d619ff" stroke-width="0.95"/><path d="M32.18 35.31 L31.38 36.24" stroke="#cb19ff" stroke-width="0.95"/><path d="M31.38 36.24 L30.46 37.08" stroke="#c119ff" stroke-width="0.95"/><path d="M30.46 37.08 L29.41 37.82" stroke="#b619ff" stroke-width="0.95"/><path d="M29.41 37.82 L28.26 38.44" stroke="#ab19ff" stroke-width="0.95"/><path d="M28.26 38.44 L27.01 38.92" stroke="#a019ff" stroke-width="0.95"/><path d="M27.01 38.92 L25.68 39.25" stroke="#9519ff" stroke-width="0.95"/><path d="M25.68 39.25 L24.3 39.42" stroke="#8b19ff" stroke-width="0.95"/><path d="M24.3 39.42 L22.87 39.42" stroke="#8119ff" stroke-width="0.95"/><path d="M22.87 39.42 L21.43 39.24" stroke="#7819ff" stroke-width="0.95"/><path d="M21.43 39.24 L20 38.87" stroke="#6f19ff" stroke-width="0.95"/><path d="M20 38.87 L18.59 38.33" stroke="#6819ff" stroke-width="0.95"/><path d="M18.59 38.33 L17.24 37.6" stroke="#6119ff" stroke-width="0.95"/><path d="M17.24 37.6 L15.96 36.69" stroke="#5c19ff" stroke-width="0.95"/><path d="M15.96 36.69 L14.78 35.62" stroke="#5819ff" stroke-width="0.95"/><path d="M14.78 35.62 L13.73 34.38" stroke="#5519ff" stroke-width="0.95"/><path d="M13.73 34.38 L12.81 33.01" stroke="#5319ff" stroke-width="0.95"/><path d="M12.81 33.01 L12.06 31.51" stroke="#5319ff" stroke-width="0.95"/><path d="M12.06 31.51 L11.49 29.9" stroke="#5419ff" stroke-width="0.95"/><path d="M11.49 29.9 L11.11 28.2" stroke="#5619ff" stroke-width="0.95"/><path d="M11.11 28.2 L10.93 26.44" stroke="#5a19ff" stroke-width="0.95"/><path d="M10.93 26.44 L10.98 24.65" stroke="#5e19ff" stroke-width="0.95"/><path d="M10.98 24.65 L11.24 22.84" stroke="#6419ff" stroke-width="0.95"/><path d="M11.24 22.84 L11.73 21.06" stroke="#6b19ff" stroke-width="0.95"/><path d="M11.73 21.06 L12.45 19.32" stroke="#7319ff" stroke-width="0.95"/><path d="M12.45 19.32 L13.38 17.65" stroke="#7c19ff" stroke-width="0.95"/><path d="M13.38 17.65 L14.53 16.09" stroke="#8619ff" stroke-width="0.95"/><path d="M14.53 16.09 L15.88 14.65" stroke="#9019ff" stroke-width="0.95"/><path d="M15.88 14.65 L17.41 13.38" stroke="#9a19ff" stroke-width="0.95"/><path d="M17.41 13.38 L19.12 12.28" stroke="#a519ff" stroke-width="0.95"/><path d="M19.12 12.28 L20.96 11.38" stroke="#b019ff" stroke-width="0.95"/><path d="M20.96 11.38 L22.93 10.71" stroke="#bb19ff" stroke-width="0.95"/><path d="M22.93 10.71 L25 10.27" stroke="#c619ff" stroke-width="0.95"/><path d="M25 10.27 L27.13 10.09" stroke="#d019ff" stroke-width="0.95"/><path d="M27.13 10.09 L29.3 10.16" stroke="#da19ff" stroke-width="0.95"/><path d="M29.3 10.16 L31.47 10.5" stroke="#e419ff" stroke-width="0.95"/><path d="M31.47 10.5 L33.61 11.11" stroke="#ec19ff" stroke-width="0.95"/><path d="M33.61 11.11 L35.69 11.98" stroke="#f419ff" stroke-width="0.95"/><path d="M35.69 11.98 L37.67 13.11" stroke="#fb19ff" stroke-width="0.95"/><path d="M37.67 13.11 L39.52 14.5" stroke="#ff19fe" stroke-width="0.95"/><path d="M39.52 14.5 L41.22 16.11" stroke="#ff19f9" stroke-width="0.95"/><path d="M41.22 16.11 L42.73 17.94" stroke="#ff19f6" stroke-width="0.95"/><path d="M42.73 17.94 L44.01 19.96" stroke="#ff19f4" stroke-width="0.95"/><path d="M44.01 19.96 L45.06 22.15" stroke="#ff19f4" stroke-width="0.95"/><path d="M45.06 22.15 L45.85 24.48" stroke="#ff19f4" stroke-width="0.95"/><path d="M45.85 24.48 L46.35 26.91" stroke="#ff19f6" stroke-width="0.95"/><path d="M46.35 26.91 L46.56 29.42" stroke="#ff19f9" stroke-width="0.95"/><path d="M46.56 29.42 L46.47 31.96" stroke="#ff19fe" stroke-width="0.95"/><path d="M46.47 31.96 L46.07 34.5" stroke="#fa19ff" stroke-width="0.95"/><path d="M46.07 34.5 L45.35 37" stroke="#f419ff" stroke-width="0.95"/><path d="M45.35 37 L44.33 39.42" stroke="#ec19ff" stroke-width="0.95"/><path d="M44.33 39.42 L43.01 41.72" stroke="#e319ff" stroke-width="0.95"/><path d="M43.01 41.72 L41.4 43.88" stroke="#da19ff" stroke-width="0.95"/><path d="M41.4 43.88 L39.53 45.84" stroke="#d019ff" stroke-width="0.95"/><path d="M39.53 45.84 L37.41 47.58" stroke="#c519ff" stroke-width="0.95"/><path d="M37.41 47.58 L35.07 49.07" stroke="#bb19ff" stroke-width="0.95"/><path d="M35.07 49.07 L32.54 50.28" stroke="#b019ff" stroke-width="0.95"/><path d="M32.54 50.28 L29.86 51.19" stroke="#a519ff" stroke-width="0.95"/><path d="M29.86 51.19 L27.06 51.77" stroke="#9a19ff" stroke-width="0.95"/><path d="M27.06 51.77 L24.18 52.02" stroke="#8f19ff" stroke-width="0.95"/><path d="M24.18 52.02 L21.27 51.91" stroke="#8519ff" stroke-width="0.95"/><path d="M21.27 51.91 L18.36 51.45" stroke="#7c19ff" stroke-width="0.95"/><path d="M18.36 51.45 L15.5 50.64" stroke="#7319ff" stroke-width="0.95"/><path d="M15.5 50.64 L12.73 49.48" stroke="#6b19ff" stroke-width="0.95"/><path d="M12.73 49.48 L10.09 47.98" stroke="#6419ff" stroke-width="0.95"/><path d="M10.09 47.98 L7.64 46.15" stroke="#5e19ff" stroke-width="0.95"/><path d="M7.64 46.15 L5.39 44.02" stroke="#5a19ff" stroke-width="0.95"/><path d="M5.39 44.02 L3.41 41.62" stroke="#5619ff" stroke-width="0.95"/><path d="M3.41 41.62 L1.71 38.97" stroke="#5419ff" stroke-width="0.95"/><path d="M1.71 38.97 L0.32 36.11" stroke="#5319ff" stroke-width="0.95"/></g><circle cx="26.8" cy="27.4" r="2.6" fill="#ff40f0" opacity="0.55" filter="url(#b08)"/><rect x="0" y="0" width="3" height="3" fill="#000"/><rect x="48" y="0" width="3" height="3.4" fill="#000"/><rect x="0" y="52.8" width="3.4" height="2.2" fill="#000"/><rect x="47.8" y="52.8" width="3.2" height="2.2" fill="#000"/></g><text x="5.4" y="9.3" font-size="10.4" fill="#9a9a9a" font-family="Liberation Sans, sans-serif">L</text></svg><span class="t" style="left:835.3px;top:705.6px;font-size:9.05px;color:#1c6fd6;font-weight:normal;transform:translate(-50%,-50%);-webkit-text-stroke:0.25px #1c6fd6;">Scene N</span><svg class="a" style="left:866px;top:695.6px" width="53" height="17" viewBox="-1 0 53 17"><path d="M0 3 Q0 0 3 0 H48 Q51 0 51 3 V16 H0 Z" fill="url(#lblg)"/></svg><svg class="a g" style="left:866px;top:640px" width="53" height="56" viewBox="-1 -1 53 56"><path d="M-0.8 2.3 L2.3 -0.8 H48.7 L51.8 2.3 V55 H-0.8 Z" fill="#fafafa"/><g clip-path="url(#tc)"><rect x="0" y="0" width="51" height="55" fill="#000"/><rect x="0" y="27.9" width="51" height="1.3" fill="url(#pml)"/></g><text x="5.4" y="9.3" font-size="10.4" fill="#9a9a9a" font-family="Liberation Sans, sans-serif">;</text></svg><span class="t" style="left:894.3px;top:705.6px;font-size:9.05px;color:#1c6fd6;font-weight:normal;transform:translate(-50%,-50%);-webkit-text-stroke:0.25px #1c6fd6;">Scene ;</span><svg class="a" style="left:331px;top:771.6px" width="53" height="17" viewBox="-1 0 53 17"><path d="M0 3 Q0 0 3 0 H48 Q51 0 51 3 V16 H0 Z" fill="url(#lblg)"/></svg><svg class="a g" style="left:331px;top:716px" width="53" height="56" viewBox="-1 -1 53 56"><path d="M-0.8 2.3 L2.3 -0.8 H48.7 L51.8 2.3 V55 H-0.8 Z" fill="#fafafa"/><g clip-path="url(#tc)"><rect x="0" y="0" width="51" height="55" fill="#000"/><rect x="0" y="27.9" width="51" height="1.3" fill="url(#pml)"/></g><text x="5.4" y="9.3" font-size="10.4" fill="#9a9a9a" font-family="Liberation Sans, sans-serif">Z</text></svg><span class="t" style="left:359.3px;top:781.6px;font-size:9.05px;color:#1c6fd6;font-weight:normal;transform:translate(-50%,-50%);-webkit-text-stroke:0.25px #1c6fd6;">Scene ;</span><svg class="a" style="left:390px;top:771.6px" width="53" height="17" viewBox="-1 0 53 17"><path d="M0 3 Q0 0 3 0 H48 Q51 0 51 3 V16 H0 Z" fill="url(#lblg)"/></svg><svg class="a g" style="left:390px;top:716px" width="53" height="56" viewBox="-1 -1 53 56"><path d="M-0.8 2.3 L2.3 -0.8 H48.7 L51.8 2.3 V55 H-0.8 Z" fill="#fafafa"/><g clip-path="url(#tc)"><rect x="0" y="0" width="51" height="55" fill="#000"/><rect x="0" y="27.9" width="51" height="1.3" fill="url(#pml)"/></g><text x="5.4" y="9.3" font-size="10.4" fill="#9a9a9a" font-family="Liberation Sans, sans-serif">X</text></svg><span class="t" style="left:418.3px;top:781.6px;font-size:9.05px;color:#1c6fd6;font-weight:normal;transform:translate(-50%,-50%);-webkit-text-stroke:0.25px #1c6fd6;">Scene ;</span><svg class="a" style="left:450px;top:771.6px" width="53" height="17" viewBox="-1 0 53 17"><path d="M0 3 Q0 0 3 0 H48 Q51 0 51 3 V16 H0 Z" fill="url(#lblg)"/></svg><svg class="a g" style="left:450px;top:716px" width="53" height="56" viewBox="-1 -1 53 56"><path d="M-0.8 2.3 L2.3 -0.8 H48.7 L51.8 2.3 V55 H-0.8 Z" fill="#fafafa"/><g clip-path="url(#tc)"><rect x="0" y="0" width="51" height="55" fill="#000"/><rect x="0" y="27.9" width="51" height="1.3" fill="url(#pml)"/></g><text x="5.4" y="9.3" font-size="10.4" fill="#9a9a9a" font-family="Liberation Sans, sans-serif">C</text></svg><span class="t" style="left:478.3px;top:781.6px;font-size:9.05px;color:#1c6fd6;font-weight:normal;transform:translate(-50%,-50%);-webkit-text-stroke:0.25px #1c6fd6;">Scene ;</span><svg class="a" style="left:509px;top:771.6px" width="53" height="17" viewBox="-1 0 53 17"><path d="M0 3 Q0 0 3 0 H48 Q51 0 51 3 V16 H0 Z" fill="url(#lblg)"/></svg><svg class="a g" style="left:509px;top:716px" width="53" height="56" viewBox="-1 -1 53 56"><path d="M-0.8 2.3 L2.3 -0.8 H48.7 L51.8 2.3 V55 H-0.8 Z" fill="#fafafa"/><g clip-path="url(#tc)"><rect x="0" y="0" width="51" height="55" fill="#000"/><path d="M25.7 27.9 L0 47 V55 H51 V47 Z" fill="url(#wf)"/><g stroke="#fff" stroke-width="0.75" opacity="0.95"><path d="M25.7 27.9 L4.5 55"/><path d="M25.7 27.9 L13.5 55"/><path d="M25.7 27.9 L19.8 55"/><path d="M25.7 27.9 L25.7 55"/><path d="M25.7 27.9 L31.6 55"/><path d="M25.7 27.9 L37.9 55"/><path d="M25.7 27.9 L46.9 55"/><path d="M25.7 27.9 L0 47 M25.7 27.9 L51 47" stroke-width="0.6"/><path d="M0 47.4 H51" stroke-width="0.9"/></g><rect x="0" y="53" width="4" height="2" fill="#000"/><rect x="47" y="53" width="4" height="2" fill="#000"/></g><text x="5.4" y="9.3" font-size="10.4" fill="#9a9a9a" font-family="Liberation Sans, sans-serif">V</text></svg><span class="t" style="left:537.3px;top:781.6px;font-size:9.05px;color:#1c6fd6;font-weight:normal;transform:translate(-50%,-50%);-webkit-text-stroke:0.25px #1c6fd6;">Scene R</span><svg class="a" style="left:569px;top:771.6px" width="53" height="17" viewBox="-1 0 53 17"><path d="M0 3 Q0 0 3 0 H48 Q51 0 51 3 V16 H0 Z" fill="url(#lblg)"/></svg><svg class="a g" style="left:569px;top:716px" width="53" height="56" viewBox="-1 -1 53 56"><path d="M-0.8 2.3 L2.3 -0.8 H48.7 L51.8 2.3 V55 H-0.8 Z" fill="#fafafa"/><g clip-path="url(#tc)"><rect x="0" y="0" width="51" height="55" fill="#000"/><path d="M25.7 27.9 L0 47 V55 H51 V47 Z" fill="url(#wf)"/><g stroke="#fff" stroke-width="0.75" opacity="0.95"><path d="M25.7 27.9 L4.5 55"/><path d="M25.7 27.9 L13.5 55"/><path d="M25.7 27.9 L19.8 55"/><path d="M25.7 27.9 L25.7 55"/><path d="M25.7 27.9 L31.6 55"/><path d="M25.7 27.9 L37.9 55"/><path d="M25.7 27.9 L46.9 55"/><path d="M25.7 27.9 L0 47 M25.7 27.9 L51 47" stroke-width="0.6"/><path d="M0 47.4 H51" stroke-width="0.9"/></g><rect x="0" y="53" width="4" height="2" fill="#000"/><rect x="47" y="53" width="4" height="2" fill="#000"/></g><text x="5.4" y="9.3" font-size="10.4" fill="#9a9a9a" font-family="Liberation Sans, sans-serif">B</text></svg><span class="t" style="left:597.3px;top:781.6px;font-size:9.05px;color:#1c6fd6;font-weight:normal;transform:translate(-50%,-50%);-webkit-text-stroke:0.25px #1c6fd6;">Scene R</span><svg class="a" style="left:628px;top:771.6px" width="53" height="17" viewBox="-1 0 53 17"><path d="M0 3 Q0 0 3 0 H48 Q51 0 51 3 V16 H0 Z" fill="url(#lblg)"/></svg><svg class="a g" style="left:628px;top:716px" width="53" height="56" viewBox="-1 -1 53 56"><path d="M-0.8 2.3 L2.3 -0.8 H48.7 L51.8 2.3 V55 H-0.8 Z" fill="#fafafa"/><g clip-path="url(#tc)"><rect x="0" y="0" width="51" height="55" fill="#000"/><rect x="0" y="28" width="51" height="1" fill="#f2f2f2"/></g><text x="5.4" y="9.3" font-size="10.4" fill="#9a9a9a" font-family="Liberation Sans, sans-serif">N</text></svg><span class="t" style="left:656.3px;top:781.6px;font-size:9.05px;color:#1c6fd6;font-weight:normal;transform:translate(-50%,-50%);-webkit-text-stroke:0.25px #1c6fd6;">Scene Y</span><svg class="a" style="left:688px;top:771.6px" width="53" height="17" viewBox="-1 0 53 17"><path d="M0 3 Q0 0 3 0 H48 Q51 0 51 3 V16 H0 Z" fill="url(#lblg)"/></svg><svg class="a g" style="left:688px;top:716px" width="53" height="56" viewBox="-1 -1 53 56"><path d="M-0.8 2.3 L2.3 -0.8 H48.7 L51.8 2.3 V55 H-0.8 Z" fill="#fafafa"/><g clip-path="url(#tc)"><rect x="0" y="0" width="51" height="55" fill="#000"/><g filter="url(#b05)"><path d="M25.5 27.9 L22.6 -1 L24.09 -1 Z" fill="#e00b0b"/><path d="M25.5 27.9 L24.09 -1 L25.58 -1 Z" fill="#e0520b"/><path d="M25.5 27.9 L25.58 -1 L27.06 -1 Z" fill="#e0ab0b"/><path d="M25.5 27.9 L27.06 -1 L28.55 -1 Z" fill="#bde00b"/><path d="M25.5 27.9 L28.55 -1 L30.04 -1 Z" fill="#2fe00b"/><path d="M25.5 27.9 L30.04 -1 L31.52 -1 Z" fill="#0be052"/><path d="M25.5 27.9 L31.52 -1 L33.01 -1 Z" fill="#0bcfe0"/><path d="M25.5 27.9 L33.01 -1 L34.5 -1 Z" fill="#0b41e0"/><path d="M25.5 27.9 L52 19.5 L52 21.12 Z" fill="#0be0bd"/><path d="M25.5 27.9 L52 21.12 L52 22.75 Z" fill="#0be052"/><path d="M25.5 27.9 L52 22.75 L52 24.38 Z" fill="#52e00b"/><path d="M25.5 27.9 L52 24.38 L52 26 Z" fill="#e0e00b"/><path d="M25.5 27.9 L52 26 L52 27.62 Z" fill="#e0880b"/><path d="M25.5 27.9 L52 27.62 L52 29.25 Z" fill="#e02f0b"/><path d="M25.5 27.9 L52 29.25 L52 30.88 Z" fill="#e00b0b"/><path d="M25.5 27.9 L52 30.88 L52 32.5 Z" fill="#0b2fe0"/><path d="M25.5 27.9 L52 35.5 L52 37.57 Z" fill="#0b41e0"/><path d="M25.5 27.9 L52 37.57 L52 39.64 Z" fill="#0bbde0"/><path d="M25.5 27.9 L52 39.64 L52 41.71 Z" fill="#0be052"/><path d="M25.5 27.9 L52 41.71 L52 43.79 Z" fill="#76e00b"/><path d="M25.5 27.9 L52 43.79 L52 45.86 Z" fill="#e0cf0b"/><path d="M25.5 27.9 L52 45.86 L52 47.93 Z" fill="#e0640b"/><path d="M25.5 27.9 L52 47.93 L52 50 Z" fill="#e00b0b"/></g><path d="M25.5 27.9 L34 -1 M25.5 27.9 L52 20 M25.5 27.9 L52 36" stroke="#3080ff" stroke-width="0.6" opacity="0.8"/></g><text x="5.4" y="9.3" font-size="10.4" fill="#9a9a9a" font-family="Liberation Sans, sans-serif">M</text></svg><span class="t" style="left:716.3px;top:781.6px;font-size:9.05px;color:#1c6fd6;font-weight:normal;transform:translate(-50%,-50%);-webkit-text-stroke:0.25px #1c6fd6;">Scene .</span><svg class="a" style="left:747px;top:771.6px" width="53" height="17" viewBox="-1 0 53 17"><path d="M0 3 Q0 0 3 0 H48 Q51 0 51 3 V16 H0 Z" fill="url(#lblg)"/></svg><svg class="a g" style="left:747px;top:716px" width="53" height="56" viewBox="-1 -1 53 56"><path d="M-0.8 2.3 L2.3 -0.8 H48.7 L51.8 2.3 V55 H-0.8 Z" fill="#fafafa"/><g clip-path="url(#tc)"><rect x="0" y="0" width="51" height="55" fill="#000"/><defs><linearGradient id="u14" x1="0" y1="0" x2="1" y2="0"><stop offset="0" stop-color="#052e2e"/><stop offset="0.5" stop-color="#0b5c5c"/><stop offset="1" stop-color="#052e2e"/></linearGradient><linearGradient id="u14b" x1="0" y1="0" x2="1" y2="0"><stop offset="0" stop-color="#0a4c4c"/><stop offset="0.5" stop-color="#1aa4a4"/><stop offset="1" stop-color="#0a4c4c"/></linearGradient><linearGradient id="u14v" x1="0" y1="0" x2="0" y2="1"><stop offset="0" stop-color="#000" stop-opacity="0"/><stop offset="1" stop-color="#000" stop-opacity="0.5"/></linearGradient></defs><path d="M0 41.2 H51 V55 H0 Z" fill="url(#u14)"/><g filter="url(#b08)"><path d="M25.5 27.4 L1 42 H50 Z" fill="#063a3a"/><path d="M25.5 27.4 L7 42 H44 Z" fill="#0a5858"/><path d="M25.5 27.4 L13 42 H38 Z" fill="#108484"/><path d="M25.5 27.4 L18 42 H33 Z" fill="#18b4b4"/><path d="M25.5 27.4 L22 40 H29 Z" fill="#28e4e4"/><path d="M25.5 27.4 L24.3 36 H26.7 Z" fill="#70ffff"/></g><rect x="0" y="41" width="51" height="14" fill="url(#u14v)"/><rect x="0" y="41" width="51" height="1.3" fill="url(#u14b)"/><rect x="0" y="47.9" width="51" height="1.3" fill="url(#u14b)" opacity="0.85"/><rect x="0" y="53.4" width="3.4" height="1.6" fill="#000"/><rect x="47.6" y="53.4" width="3.4" height="1.6" fill="#000"/></g><text x="5.4" y="9.3" font-size="10.4" fill="#9a9a9a" font-family="Liberation Sans, sans-serif">,</text></svg><span class="t" style="left:775.3px;top:781.6px;font-size:9.05px;color:#1c6fd6;font-weight:normal;transform:translate(-50%,-50%);-webkit-text-stroke:0.25px #1c6fd6;">Scene O</span><svg class="a" style="left:807px;top:771.6px" width="53" height="17" viewBox="-1 0 53 17"><path d="M0 3 Q0 0 3 0 H48 Q51 0 51 3 V16 H0 Z" fill="url(#lblg)"/></svg><svg class="a g" style="left:807px;top:716px" width="53" height="56" viewBox="-1 -1 53 56"><path d="M-0.8 2.3 L2.3 -0.8 H48.7 L51.8 2.3 V55 H-0.8 Z" fill="#fafafa"/><g clip-path="url(#tc)"><rect x="0" y="0" width="51" height="55" fill="#000"/><defs><linearGradient id="u15" gradientUnits="userSpaceOnUse" x1="25.8" y1="28.5" x2="8" y2="43"><stop offset="0" stop-color="#ff30e8"/><stop offset="0.5" stop-color="#c018d0" stop-opacity="0.8"/><stop offset="1" stop-color="#7010a0" stop-opacity="0"/></linearGradient><linearGradient id="u15b" gradientUnits="userSpaceOnUse" x1="25.8" y1="28.5" x2="37" y2="55"><stop offset="0" stop-color="#6a30ff"/><stop offset="0.5" stop-color="#3020e0" stop-opacity="0.9"/><stop offset="1" stop-color="#2010c0" stop-opacity="0.15"/></linearGradient><linearGradient id="u15f" gradientUnits="userSpaceOnUse" x1="22" y1="30" x2="20" y2="52"><stop offset="0" stop-color="#7018c0" stop-opacity="0.55"/><stop offset="1" stop-color="#300870" stop-opacity="0"/></linearGradient></defs><path d="M25.8 28.5 L7 43 L18 55 L37 55 Z" fill="url(#u15f)" filter="url(#b08)"/><path d="M26.2 28.2 L8 43" stroke="url(#u15)" stroke-width="1.6" stroke-linecap="round"/><path d="M26 29 L29 34.5 L37 55" stroke="url(#u15b)" stroke-width="1.1" fill="none"/><path d="M22.5 31 Q25 35.5 29 34.5" stroke="#5a30f0" stroke-width="0.8" fill="none"/><circle cx="25.6" cy="28.6" r="1.5" fill="#ff50f0"/></g><text x="5.4" y="9.3" font-size="10.4" fill="#9a9a9a" font-family="Liberation Sans, sans-serif">.</text></svg><span class="t" style="left:835.3px;top:781.6px;font-size:9.05px;color:#1c6fd6;font-weight:normal;transform:translate(-50%,-50%);-webkit-text-stroke:0.25px #1c6fd6;">Scene ,</span><svg class="a" style="left:866px;top:771.6px" width="53" height="17" viewBox="-1 0 53 17"><path d="M0 3 Q0 0 3 0 H48 Q51 0 51 3 V16 H0 Z" fill="url(#lblg)"/></svg><svg class="a g" style="left:866px;top:716px" width="53" height="56" viewBox="-1 -1 53 56"><path d="M-0.8 2.3 L2.3 -0.8 H48.7 L51.8 2.3 V55 H-0.8 Z" fill="#fafafa"/><g clip-path="url(#tc)"><rect x="0" y="0" width="51" height="55" fill="#000"/><defs><linearGradient id="u16" x1="0" y1="0" x2="1" y2="0"><stop offset="0" stop-color="#2a20ff"/><stop offset="0.7" stop-color="#4422f0"/><stop offset="1" stop-color="#a020e0"/></linearGradient><linearGradient id="u16b" gradientUnits="userSpaceOnUse" x1="0" y1="46" x2="27" y2="30"><stop offset="0" stop-color="#4a0a80" stop-opacity="0.55"/><stop offset="0.5" stop-color="#7c14b0"/><stop offset="1" stop-color="#c020d8"/></linearGradient><radialGradient id="u16r" gradientUnits="userSpaceOnUse" cx="32" cy="20" r="13"><stop offset="0" stop-color="#d020c8" stop-opacity="0.6"/><stop offset="0.5" stop-color="#900c90" stop-opacity="0.3"/><stop offset="1" stop-color="#600860" stop-opacity="0"/></radialGradient></defs><path d="M28 27 L36 9 L46 16 L44 24 Z" fill="url(#u16r)" filter="url(#b15)"/><circle cx="31" cy="21.5" r="7" fill="url(#u16r)" opacity="0.7"/><path d="M28 27 L51 25.2 L51 27 L30 28.6 Z" fill="#3a0a44" opacity="0.8"/><path d="M0 21.3 L8 22.5 L16 25 L24 25.8 L27 28 L25 30 L14 31.5 L6 33 L0 33.8 Z" fill="url(#u16)" filter="url(#b05)"/><path d="M0 42.5 L12 35.5 L26 28 L28.5 31 L14 40 L0 48.5 Z" fill="url(#u16b)" filter="url(#b08)"/><path d="M3 24 Q9 23 13 30 Q15 33 18 27" stroke="#6a50ff" stroke-width="0.7" fill="none" opacity="0.8"/><path d="M25.5 28.5 Q26 22.5 29.5 23 Q32.5 24 32 28" stroke="#ff40f0" stroke-width="1.2" fill="none"/></g><text x="5.4" y="9.3" font-size="10.4" fill="#9a9a9a" font-family="Liberation Sans, sans-serif">/</text></svg><span class="t" style="left:894.3px;top:781.6px;font-size:9.05px;color:#1c6fd6;font-weight:normal;transform:translate(-50%,-50%);-webkit-text-stroke:0.25px #1c6fd6;">Scene ,</span><div style="left:627.5px;top:545px;width:58px;height:14px;overflow:hidden;"><svg class="jt" style="left:0.49px;top:2.18px" width="60.5" height="11.7" viewBox="0 -8.55 60.5 11.7"><text x="0" y="0" font-size="9" fill="#fff">ｼｰﾝ名前変更可</text></svg></div>
</div></div>
</body></html>
